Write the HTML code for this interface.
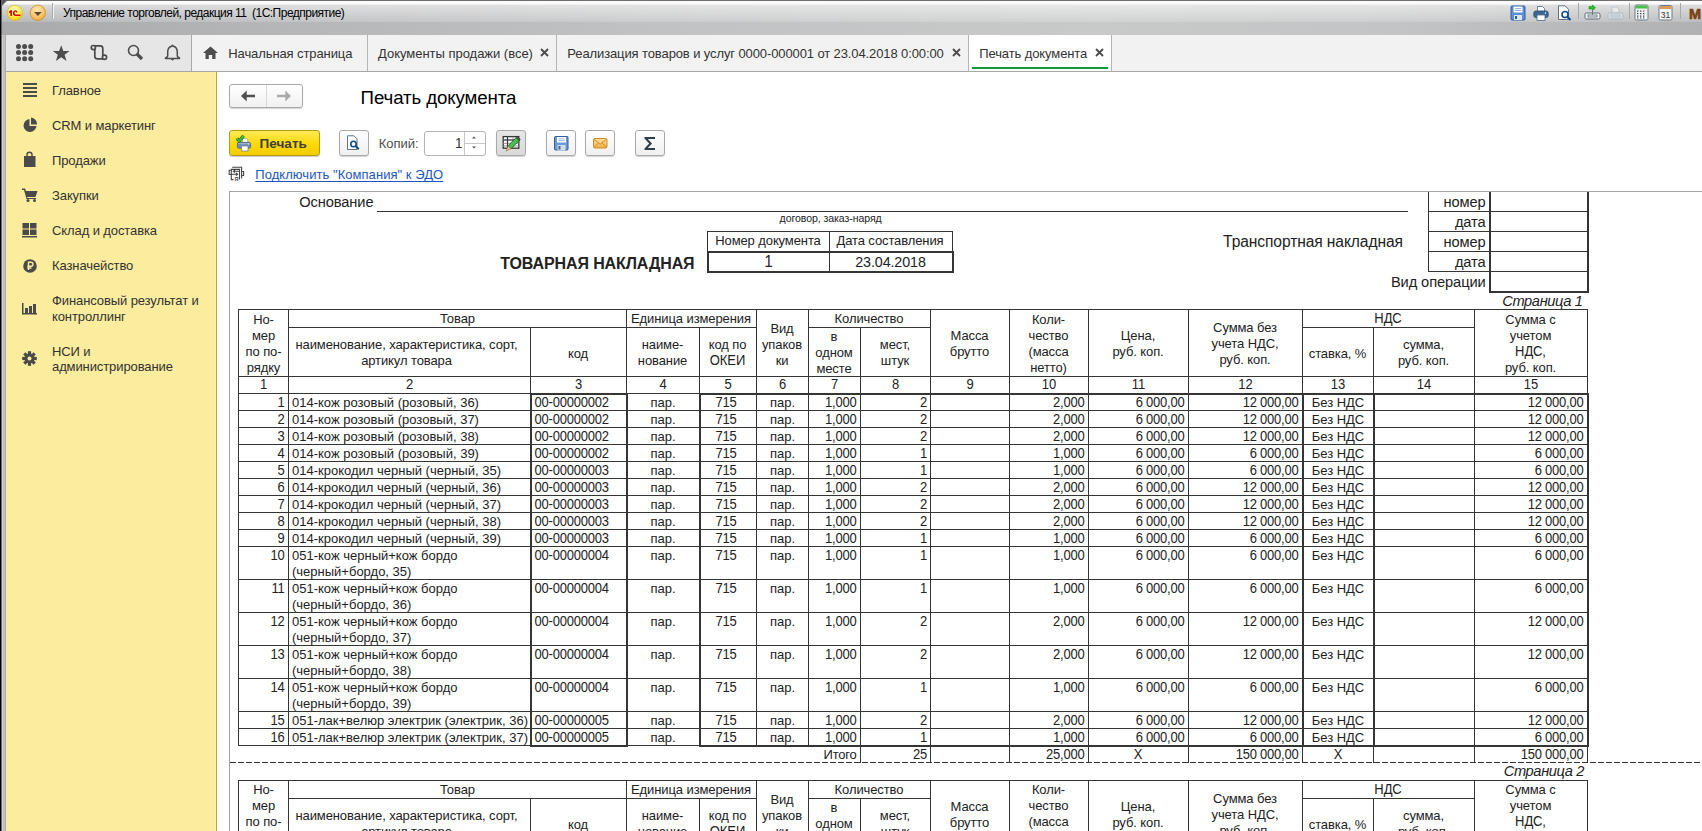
<!DOCTYPE html>
<html><head><meta charset="utf-8"><title>Печать документа</title>
<style>
html,body{margin:0;padding:0;}
body{width:1702px;height:831px;overflow:hidden;position:relative;background:#fff;font-family:"Liberation Sans",sans-serif;}
.r{position:absolute;box-sizing:content-box;}
.t{position:absolute;white-space:nowrap;font-family:"Liberation Sans",sans-serif;}
svg.r{overflow:visible;}
</style></head><body>
<div class="r" style="left:0;top:0;width:1702px;height:35px;background:linear-gradient(90deg,#a9aaac 0,#b6b7b9 300px,#c2c3c4 700px,#c8c9c9 1100px,#c3c4c5 1400px,#b0b1b3 1702px)"></div>
<div class="r" style="left:0;top:0;width:1702px;height:22px;background:linear-gradient(#6e6e6e 0 1px,#fbfbfb 1px 4px,rgba(255,255,255,0.55) 5px,rgba(255,255,255,0.2) 21px,rgba(255,255,255,0.15) 22px)"></div>
<div class="r" style="left:0;top:35px;width:6px;height:796px;background:linear-gradient(90deg,#000 0 1px,#6a6a6a 1px 2px,#d0d0d0 2px 3px,#c0c0c0 3px 5px,#adadb2 5px 6px)"></div>
<div class="r" style="left:0;top:0;width:1px;height:35px;background:#000"></div>
<div class="r" style="left:1px;top:0;width:1px;height:35px;background:#606060"></div>
<div class="r" style="left:2px;top:0;width:6px;height:6px;background:linear-gradient(135deg,#5a5a5a 0 40%,transparent 55%)"></div>
<svg class="r" style="left:6px;top:4px" width="18" height="18" viewBox="0 0 18 18">
<defs><radialGradient id="g1c" cx="45%" cy="30%" r="70%"><stop offset="0" stop-color="#ffffc8"/><stop offset="0.55" stop-color="#fff060"/><stop offset="1" stop-color="#f4d000"/></radialGradient></defs>
<circle cx="8.85" cy="8.8" r="7.6" fill="url(#g1c)" stroke="#d8b820" stroke-width="0.7"/>
<path d="M2.9 7.6 L4.6 6.2 L6 6.2 L6 12 L4.4 12 L4.4 8.6 L3.2 9.2Z" fill="#e00000"/>
<path d="M11.2 8.4 C11.4 7 10.4 6.2 9.4 6.2 C7.8 6.2 6.9 7.5 6.9 9 C6.9 10.6 7.9 12 9.6 12 L14.4 12 L14.4 10.4 L9.8 10.4 C9 10.4 8.5 9.8 8.5 9 C8.5 8.2 9 7.6 9.6 7.6 C10 7.6 10.2 7.9 10.2 8.4Z" fill="#e00000"/>
</svg>
<svg class="r" style="left:30px;top:4px" width="18" height="18" viewBox="0 0 18 18">
<defs><radialGradient id="gdd" cx="45%" cy="30%" r="70%"><stop offset="0" stop-color="#ffe8b8"/><stop offset="0.6" stop-color="#ffc870"/><stop offset="1" stop-color="#f8a838"/></radialGradient></defs>
<circle cx="7.8" cy="8.8" r="7.7" fill="url(#gdd)" stroke="#c09030" stroke-width="0.8"/>
<path d="M4 7.9 L11.8 7.9 L7.9 12Z" fill="#5a4a30"/>
</svg>
<div class="r" style="left:52px;top:3px;width:1px;height:16px;background:#a9a9a9;"></div>
<div class="r" style="left:53px;top:3px;width:1px;height:16px;background:#f4f4f4;"></div>
<div class="t" style="top:7.00px;font-size:12px;line-height:12px;color:#000;letter-spacing:-0.52px;left:63px;white-space:pre;">Управление торговлей, редакция 11  (1С:Предприятие)</div>
<svg class="r" style="left:1510px;top:5px" width="16" height="16" viewBox="0 0 16 16">
<rect x="1" y="1" width="14" height="14" rx="1" fill="#5b8fd6" stroke="#2f5c9e"/>
<rect x="3.5" y="1.5" width="9" height="6" fill="#fff"/><rect x="5" y="3" width="6" height="0.8" fill="#7fa4d8"/><rect x="5" y="5" width="6" height="0.8" fill="#7fa4d8"/>
<rect x="4" y="10" width="8" height="5" fill="#dfe6ee"/><rect x="5" y="11" width="2" height="3" fill="#2f5c9e"/>
</svg>
<svg class="r" style="left:1533px;top:5px" width="16" height="16" viewBox="0 0 16 16">
<path d="M4.5 1.5 L9.5 1.5 L11.5 3.5 L11.5 7 L4.5 7Z" fill="#fff" stroke="#4a6a8a" stroke-width="0.8"/>
<rect x="0.8" y="6" width="14.4" height="6.5" rx="2" fill="#3d6896" stroke="#254a70" stroke-width="0.8"/>
<rect x="4" y="10" width="8" height="5.5" fill="#fff" stroke="#4a6a8a" stroke-width="0.8"/>
<circle cx="12.5" cy="8" r="0.7" fill="#fff"/>
</svg>
<svg class="r" style="left:1557px;top:5px" width="16" height="16" viewBox="0 0 16 16">
<path d="M1.5 0.8 L8 0.8 L11.5 4.3 L11.5 14.5 L1.5 14.5Z" fill="#fff" stroke="#50657a" stroke-width="0.9"/>
<circle cx="8" cy="9.5" r="3" fill="#fff" stroke="#0f4d8a" stroke-width="1.6"/>
<path d="M10 11.5 L13.5 15" stroke="#0f4d8a" stroke-width="2.2"/>
</svg>
<div class="r" style="left:1578px;top:3px;width:1px;height:16px;background:#a9a9a9;"></div>
<svg class="r" style="left:1584px;top:4px" width="17" height="17" viewBox="0 0 17 17">
<path d="M8.5 1 L11.5 3.8 L8.5 6.6 L8.5 5 L5 5 L5 2.6 L8.5 2.6Z" fill="#22c820" stroke="#128a10" stroke-width="0.6"/>
<rect x="1" y="9" width="15" height="6" rx="1.5" fill="#f4f4f4" stroke="#5a6a78" stroke-width="1"/>
<rect x="4" y="11" width="9" height="2" fill="none" stroke="#5a6a78" stroke-width="0.8"/>
<path d="M8.5 6.5 L8.5 11" stroke="#5a6a78" stroke-width="0.8"/>
</svg>
<svg class="r" style="left:1607px;top:4px" width="17" height="17" viewBox="0 0 17 17" opacity="0.45">
<path d="M5 3 L10 3 L12 5 L12 9 L5 9Z" fill="#fff" stroke="#8aa0b5" stroke-width="0.8"/>
<rect x="1" y="9" width="15" height="6" rx="1.5" fill="#eef2f6" stroke="#8aa0b5" stroke-width="1"/>
<rect x="4" y="11" width="9" height="2" fill="none" stroke="#8aa0b5" stroke-width="0.8"/>
</svg>
<div class="r" style="left:1629px;top:3px;width:1px;height:16px;background:#a9a9a9;"></div>
<svg class="r" style="left:1634px;top:4px" width="15" height="17" viewBox="0 0 15 17">
<rect x="1" y="1" width="13" height="15" rx="1.5" fill="#f2f4f6" stroke="#6d7a86" stroke-width="1"/>
<rect x="1.5" y="1.5" width="12" height="3" fill="#49c14a"/>
<g fill="#3a4550"><rect x="3" y="6.5" width="1.4" height="1.2"/><rect x="6" y="6.5" width="1.4" height="1.2"/><rect x="9" y="6.5" width="1.4" height="1.2" fill="#e02020"/>
<rect x="3" y="9" width="1.4" height="1.2"/><rect x="6" y="9" width="1.4" height="1.2"/><rect x="9" y="9" width="1.4" height="1.2"/>
<rect x="3" y="11.5" width="1.4" height="1.2"/><rect x="6" y="11.5" width="1.4" height="1.2"/><rect x="9" y="11.5" width="1.4" height="1.2"/>
<rect x="3" y="13.5" width="1.4" height="1"/><rect x="6" y="13.5" width="1.4" height="1"/><rect x="9" y="13.5" width="1.4" height="1"/></g>
</svg>
<svg class="r" style="left:1658px;top:4px" width="15" height="17" viewBox="0 0 15 17">
<rect x="1" y="1.5" width="13" height="14.5" rx="1.5" fill="#f6f6f6" stroke="#6d7a86" stroke-width="1"/>
<rect x="1.5" y="2" width="12" height="3" fill="#d99a60"/>
<text x="7.5" y="13.8" font-family="Liberation Sans" font-size="8.5" text-anchor="middle" fill="#333">31</text>
</svg>
<div class="r" style="left:1680px;top:3px;width:1px;height:16px;background:#a9a9a9;"></div>
<div class="t" style="top:7.00px;font-size:14.5px;line-height:14.5px;color:#7a4210;font-weight:bold;left:1689px;-webkit-text-stroke:0.6px #7a4210;">M</div>
<div class="r" style="left:6px;top:35px;width:1696px;height:36px;background:#f2f2f2;"></div>
<div class="r" style="left:6px;top:35px;width:185px;height:36px;background:#e6e6e6;"></div>
<div class="r" style="left:191px;top:35px;width:1px;height:36px;background:#a9a9a9;"></div>
<div class="r" style="left:6px;top:71px;width:1696px;height:1px;background:#a6a6a6;"></div>
<svg class="r" style="left:16px;top:44px" width="18" height="18" viewBox="0 0 18 18" fill="#4d4d4d"><circle cx="2.5" cy="2.5" r="2.5"/><circle cx="8.6" cy="2.5" r="2.5"/><circle cx="14.7" cy="2.5" r="2.5"/><circle cx="2.5" cy="8.6" r="2.5"/><circle cx="8.6" cy="8.6" r="2.5"/><circle cx="14.7" cy="8.6" r="2.5"/><circle cx="2.5" cy="14.7" r="2.5"/><circle cx="8.6" cy="14.7" r="2.5"/><circle cx="14.7" cy="14.7" r="2.5"/></svg>
<svg class="r" style="left:53px;top:45px" width="17" height="17" viewBox="0 0 17 17"><path d="M8.2 0.2 L10.3 6 L16.5 6 L11.6 9.7 L13.5 16 L8.2 12.2 L2.9 16 L4.8 9.7 L-0.1 6 L6.1 6Z" fill="#4d4d4d"/></svg>
<svg class="r" style="left:86px;top:40px" width="26" height="26" viewBox="0 0 26 26" fill="none" stroke="#4a4a4a" stroke-width="1.7"><path d="M7.4 5.8 L14.2 5.8 Q16.8 5.8 16.8 8.4 L16.8 15.8"/><path d="M8.8 8.6 L8.8 16.2 Q8.8 18.8 11.4 18.8 L17.5 18.8"/><circle cx="7.35" cy="7.6" r="2.1" fill="#e6e6e6"/><circle cx="18.5" cy="17.3" r="2.1" fill="#e6e6e6"/></svg>
<svg class="r" style="left:127px;top:44px" width="18" height="18" viewBox="0 0 18 18"><circle cx="6.5" cy="6.5" r="5" fill="none" stroke="#4d4d4d" stroke-width="1.6"/><path d="M10 10 L15 15" stroke="#4d4d4d" stroke-width="3.2"/></svg>
<svg class="r" style="left:164px;top:44px" width="17" height="18" viewBox="0 0 17 18"><path d="M8.5 1.2 L9.5 2.3 Q13.2 3.3 13.3 8 L13.3 12 Q13.6 13.2 15.5 14 L15.5 14.6 L1.5 14.6 L1.5 14 Q3.4 13.2 3.7 12 L3.7 8 Q3.8 3.3 7.5 2.3Z" fill="none" stroke="#4d4d4d" stroke-width="1.5" stroke-linejoin="round"/><path d="M6.8 15 L10.2 15 L8.5 16.8Z" fill="#4d4d4d"/></svg>
<svg class="r" style="left:203px;top:46px" width="16" height="14" viewBox="0 0 16 14"><path d="M7.5 0.5 L15 7 L12.5 7 L12.5 13 L9.2 13 L9.2 9 L5.8 9 L5.8 13 L2.5 13 L2.5 7 L0 7Z" fill="#4d4d4d"/></svg>
<div class="t" style="top:47.00px;font-size:13px;line-height:13px;color:#333;letter-spacing:-0.1px;left:228.3px;">Начальная страница</div>
<div class="r" style="left:367px;top:35px;width:1px;height:36px;background:#b5b5b5;"></div>
<div class="t" style="top:47.00px;font-size:13px;line-height:13px;color:#333;letter-spacing:-0.02px;left:378px;">Документы продажи (все)</div>
<svg class="r" style="left:540px;top:48px" width="9" height="9" viewBox="0 0 9 9"><path d="M1 1 L8 8 M8 1 L1 8" stroke="#4d4d4d" stroke-width="1.9"/></svg>
<div class="r" style="left:556px;top:35px;width:1px;height:36px;background:#b5b5b5;"></div>
<div class="t" style="top:47.00px;font-size:13px;line-height:13px;color:#333;letter-spacing:-0.11px;left:567.3px;">Реализация товаров и услуг 0000-000001 от 23.04.2018 0:00:00</div>
<svg class="r" style="left:952px;top:48px" width="9" height="9" viewBox="0 0 9 9"><path d="M1 1 L8 8 M8 1 L1 8" stroke="#4d4d4d" stroke-width="1.9"/></svg>
<div class="r" style="left:968px;top:35px;width:1px;height:36px;background:#b5b5b5;"></div>
<div class="r" style="left:969px;top:35px;width:142px;height:36px;background:#ffffff;"></div>
<div class="r" style="left:1111px;top:35px;width:1px;height:36px;background:#b5b5b5;"></div>
<div class="r" style="left:972px;top:67px;width:136px;height:2px;background:#16993a;"></div>
<div class="t" style="top:47.00px;font-size:13px;line-height:13px;color:#333;letter-spacing:-0.1px;left:979.2px;">Печать документа</div>
<svg class="r" style="left:1095px;top:48px" width="9" height="9" viewBox="0 0 9 9"><path d="M1 1 L8 8 M8 1 L1 8" stroke="#4d4d4d" stroke-width="1.9"/></svg>
<div class="r" style="left:6px;top:72px;width:210px;height:759px;background:#fbec9e;"></div>
<div class="r" style="left:215px;top:72px;width:1px;height:759px;background:#fdf0a8;"></div>
<div class="r" style="left:216px;top:72px;width:1px;height:759px;background:#c9a626;"></div>
<div class="t" style="top:84.00px;font-size:13px;line-height:13px;color:#333;letter-spacing:-0.1px;left:52px;">Главное</div>
<div class="t" style="top:119.00px;font-size:13px;line-height:13px;color:#333;letter-spacing:-0.1px;left:52px;">CRM и маркетинг</div>
<div class="t" style="top:154.00px;font-size:13px;line-height:13px;color:#333;letter-spacing:-0.1px;left:52px;">Продажи</div>
<div class="t" style="top:189.00px;font-size:13px;line-height:13px;color:#333;letter-spacing:-0.1px;left:52px;">Закупки</div>
<div class="t" style="top:224.00px;font-size:13px;line-height:13px;color:#333;letter-spacing:-0.1px;left:52px;">Склад и доставка</div>
<div class="t" style="top:259.00px;font-size:13px;line-height:13px;color:#333;letter-spacing:-0.1px;left:52px;">Казначейство</div>
<div class="t" style="top:294.00px;font-size:13px;line-height:13px;color:#333;letter-spacing:-0.1px;left:52px;">Финансовый результат и</div>
<div class="t" style="top:310.00px;font-size:13px;line-height:13px;color:#333;letter-spacing:-0.1px;left:52px;">контроллинг</div>
<div class="t" style="top:345.00px;font-size:13px;line-height:13px;color:#333;letter-spacing:-0.1px;left:52px;">НСИ и</div>
<div class="t" style="top:360.00px;font-size:13px;line-height:13px;color:#333;letter-spacing:-0.1px;left:52px;">администрирование</div>
<svg class="r" style="left:23px;top:83px" width="15" height="15" viewBox="0 0 15 15" fill="#4a4a4a"><rect x="0" y="0" width="14" height="2"/><rect x="0" y="4" width="14" height="2"/><rect x="0" y="8" width="14" height="2"/><rect x="0" y="12" width="14" height="2"/></svg>
<svg class="r" style="left:23px;top:117px" width="15" height="16" viewBox="0 0 15 16" fill="#4a4a4a"><path d="M6.5 2 A6.5 6.5 0 1 0 13.5 9 L6.5 9Z"/><path d="M8 0.5 A6.5 6.5 0 0 1 14 7.5 L8 7.5Z"/></svg>
<svg class="r" style="left:23px;top:151px" width="14" height="17" viewBox="0 0 14 17"><path d="M4 6 L4 3.5 Q4 1.3 6.5 1.3 Q9 1.3 9 3.5 L9 6" fill="none" stroke="#4a4a4a" stroke-width="1.4"/><path d="M1 5 L12.5 5 L12.5 16 L1 16Z" fill="#4a4a4a"/></svg>
<svg class="r" style="left:22px;top:188px" width="16" height="14" viewBox="0 0 16 14" fill="#4a4a4a"><path d="M0 0.5 L3 0.5 L4 3 L15.5 3 L13.5 9 L5 9 L5.5 10 L14 10 L14 11 L4.5 11 L2 2 L0 2Z"/><circle cx="6" cy="12.5" r="1.5"/><circle cx="12.5" cy="12.5" r="1.5"/></svg>
<svg class="r" style="left:22px;top:223px" width="16" height="15" viewBox="0 0 16 15" fill="#4a4a4a"><rect x="0.5" y="0" width="6.5" height="5.5"/><rect x="8" y="0" width="6.5" height="5.5"/><rect x="0.5" y="6.5" width="6.5" height="5.5"/><rect x="8" y="6.5" width="6.5" height="5.5"/><rect x="0" y="13" width="15" height="1.5"/></svg>
<svg class="r" style="left:23px;top:259px" width="14" height="14" viewBox="0 0 14 14"><circle cx="7" cy="7" r="6.8" fill="#4a4a4a"/><path d="M5.5 11 L5.5 3.3 L8 3.3 Q10 3.3 10 5.3 Q10 7.3 8 7.3 L4.3 7.3 M4.3 9 L8.5 9" fill="none" stroke="#fbec9e" stroke-width="1.4"/></svg>
<svg class="r" style="left:22px;top:303px" width="16" height="12" viewBox="0 0 16 12" fill="#4a4a4a"><rect x="0" y="0" width="1.5" height="11"/><rect x="3" y="5" width="3" height="6"/><rect x="7" y="3" width="3" height="8"/><rect x="11" y="1" width="3" height="10"/><rect x="0" y="10" width="15" height="1.5"/></svg>
<svg class="r" style="left:22px;top:351px" width="16" height="16" viewBox="0 0 16 16"><g transform="translate(7.5 7.5)" fill="#4a4a4a"><rect x="-1.6" y="-7.3" width="3.2" height="3.5" transform="rotate(0)"/><rect x="-1.6" y="-7.3" width="3.2" height="3.5" transform="rotate(45)"/><rect x="-1.6" y="-7.3" width="3.2" height="3.5" transform="rotate(90)"/><rect x="-1.6" y="-7.3" width="3.2" height="3.5" transform="rotate(135)"/><rect x="-1.6" y="-7.3" width="3.2" height="3.5" transform="rotate(180)"/><rect x="-1.6" y="-7.3" width="3.2" height="3.5" transform="rotate(225)"/><rect x="-1.6" y="-7.3" width="3.2" height="3.5" transform="rotate(270)"/><rect x="-1.6" y="-7.3" width="3.2" height="3.5" transform="rotate(315)"/><circle r="5"/><circle r="2" fill="#fbec9e"/></g></svg>
<div class="r" style="left:217px;top:72px;width:1485px;height:759px;background:#ffffff;"></div>
<div class="r" style="left:229px;top:84px;width:72px;height:22px;border:1px solid #a9a9a9;border-radius:3px;background:linear-gradient(#ffffff,#f1f1f1);box-shadow:0 1px 1px rgba(0,0,0,0.18)"></div>
<div class="r" style="left:266px;top:85px;width:1px;height:22px;background:#d8d8d8;"></div>
<svg class="r" style="left:240px;top:89px" width="16" height="14" viewBox="0 0 16 14"><path d="M1 7 L6.7 1.4 L6.7 5.8 L15 5.8 L15 8.3 L6.7 8.3 L6.7 12.6Z" fill="#505050"/></svg>
<svg class="r" style="left:276px;top:89px" width="16" height="14" viewBox="0 0 16 14"><path d="M15 7 L9.3 1.4 L9.3 5.8 L1 5.8 L1 8.3 L9.3 8.3 L9.3 12.6Z" fill="#aaaaaa"/></svg>
<div class="t" style="top:89.00px;font-size:18.67px;line-height:18.67px;color:#000;letter-spacing:-0.1px;left:360.6px;">Печать документа</div>
<div class="r" style="left:229px;top:130px;width:89px;height:24px;border:1px solid #b89a10;border-radius:3px;background:linear-gradient(#ffea58,#fcd800 60%,#f2cc00);box-shadow:0 1px 1px rgba(0,0,0,0.2)"></div>
<svg class="r" style="left:235px;top:134px" width="18" height="18" viewBox="0 0 18 18"><path d="M7.5 4.5 L11.5 4.5 L12.8 5.8 L12.8 8.5 L7.5 8.5Z" fill="#fff" stroke="#8a96a4" stroke-width="0.7"/><rect x="2.3" y="8.4" width="13.3" height="5.8" rx="1.6" fill="#6f8fb8" stroke="#48688f" stroke-width="0.9"/><rect x="3" y="9.2" width="12" height="0.9" fill="#a8bcd6"/><rect x="6.6" y="12" width="6.4" height="5" fill="#fff" stroke="#7a8694" stroke-width="0.8"/><circle cx="13.6" cy="10" r="0.55" fill="#fff"/><path d="M1.9 4.5 L4.2 7 L8.6 1.8" fill="none" stroke="#1f6a1f" stroke-width="3.2" stroke-linejoin="round"/><path d="M1.9 4.5 L4.2 7 L8.6 1.8" fill="none" stroke="#3ec83e" stroke-width="1.8" stroke-linejoin="round"/></svg>
<div class="t" style="top:137.00px;font-size:13.5px;line-height:13.5px;color:#404040;font-weight:bold;letter-spacing:0.05px;left:259.5px;">Печать</div>
<div class="r" style="left:339px;top:130px;width:28px;height:24px;border:1px solid #a9a9a9;border-radius:3px;background:linear-gradient(#ffffff,#f0f0f0);box-shadow:0 1px 1px rgba(0,0,0,0.18)"></div>
<svg class="r" style="left:346px;top:135px" width="16" height="16" viewBox="0 0 16 16"><path d="M1.5 0.8 L8 0.8 L11 3.8 L11 14.5 L1.5 14.5Z" fill="#fff" stroke="#50657a" stroke-width="0.9"/><circle cx="7.5" cy="9" r="2.7" fill="#fff" stroke="#0f4d8a" stroke-width="1.6"/><path d="M9.3 10.8 L12.8 14.3" stroke="#0f4d8a" stroke-width="2"/></svg>
<div class="t" style="top:137.00px;font-size:13px;line-height:13px;color:#4d4d4d;letter-spacing:-0.05px;left:378.8px;">Копий:</div>
<div class="r" style="left:424px;top:131px;width:60px;height:23px;border:1px solid #b4b4b4;border-radius:3px;background:#fff"></div>
<div class="r" style="left:464px;top:132px;width:1px;height:23px;background:#c8c8c8;"></div>
<div class="r" style="left:465px;top:143px;width:20px;height:1px;background:#c8c8c8;"></div>
<div class="t" style="top:137.00px;font-size:13.5px;line-height:13.5px;color:#333;transform:scaleY(1.07);transform-origin:0 11.43px;right:1239.5px;">1</div>
<svg class="r" style="left:471px;top:135px" width="6" height="16" viewBox="0 0 6 16" fill="#555"><path d="M1 3.5 L3 1.5 L5 3.5Z"/><path d="M1 11.5 L3 13.5 L5 11.5Z"/></svg>
<div class="r" style="left:496px;top:130px;width:28px;height:24px;border:1px solid #a9a9a9;border-radius:3px;background:linear-gradient(#e6e6e6,#dadada);box-shadow:0 1px 1px rgba(0,0,0,0.18)"></div>
<svg class="r" style="left:502px;top:135px" width="19" height="18" viewBox="0 0 19 18"><rect x="1.2" y="1.6" width="15.6" height="11.6" fill="#fff" stroke="#333" stroke-width="1.3"/><path d="M1.2 5 L16.8 5 M1.2 8.3 L16.8 8.3 M1.2 11 L16.8 11 M5.5 1.6 L5.5 13.2 M11 1.6 L11 13.2" stroke="#8a8a8a" stroke-width="0.9"/><path d="M1.2 5 L16.8 5 M5.5 1.6 L5.5 13.2" stroke="#333" stroke-width="1.1"/><path d="M14.2 2.6 L17.2 5.6 L9 13.8 L6 10.8Z" fill="#45c050" stroke="#1f5a28" stroke-width="0.8"/><path d="M14.2 2.6 L15.3 1.5 L18.3 4.5 L17.2 5.6Z" fill="#555" stroke="#333" stroke-width="0.6"/><path d="M6 10.8 L9 13.8 L4.2 16.2Z" fill="#e8c080" stroke="#8a6a3a" stroke-width="0.5"/></svg>
<div class="r" style="left:546px;top:130px;width:28px;height:24px;border:1px solid #a9a9a9;border-radius:3px;background:linear-gradient(#ffffff,#f0f0f0);box-shadow:0 1px 1px rgba(0,0,0,0.18)"></div>
<svg class="r" style="left:553.5px;top:135.5px" width="15" height="15" viewBox="0 0 15 15"><rect x="0.5" y="0.5" width="13.5" height="13.5" rx="1" fill="#6a9ad8" stroke="#2f5fa0"/><rect x="3" y="1" width="9" height="5.5" fill="#fff"/><rect x="4.5" y="2.5" width="6" height="0.8" fill="#7fa4d8"/><rect x="4.5" y="4.3" width="6" height="0.8" fill="#7fa4d8"/><rect x="3.5" y="9" width="8" height="5.5" fill="#d5dde6"/><rect x="4.5" y="10" width="2" height="3.5" fill="#3a64a0"/></svg>
<div class="r" style="left:585px;top:130px;width:28px;height:24px;border:1px solid #a9a9a9;border-radius:3px;background:linear-gradient(#ffffff,#f0f0f0);box-shadow:0 1px 1px rgba(0,0,0,0.18)"></div>
<svg class="r" style="left:592.5px;top:137.5px" width="15" height="11" viewBox="0 0 15 11"><defs><linearGradient id="gml" x1="0" y1="0" x2="0" y2="1"><stop offset="0" stop-color="#fbe0a0"/><stop offset="1" stop-color="#f0b040"/></linearGradient></defs><rect x="0.5" y="0.5" width="13.5" height="9.5" rx="1.5" fill="url(#gml)" stroke="#d08a28"/><path d="M1 1.2 L7.25 6.3 L13.5 1.2 M1 9.5 L5.3 5.2 M13.5 9.5 L9.2 5.2" fill="none" stroke="#c8862a" stroke-width="0.9"/></svg>
<div class="r" style="left:635px;top:130px;width:28px;height:24px;border:1px solid #a9a9a9;border-radius:3px;background:linear-gradient(#ffffff,#f0f0f0);box-shadow:0 1px 1px rgba(0,0,0,0.18)"></div>
<svg class="r" style="left:642px;top:134.5px" width="16" height="17" viewBox="0 0 16 17"><path d="M2.5 2 L13 2 L13 4 L5.8 4 L10 8.5 L5.8 13 L13 13 L13 15 L2.5 15 L2.5 13.5 L7.2 8.5 L2.5 3.5Z" fill="#2e3e4e"/></svg>
<svg class="r" style="left:225px;top:162px" width="24" height="22" viewBox="0 0 24 22" fill="none" stroke="#454545" stroke-width="1.1"><path d="M7.2 5.3 L16.6 5.3 L16.6 16.6"/><path d="M8.5 17.6 L6.3 17.6 L6.3 7.4 L14.5 7.4 L14.5 17.6"/><path d="M6.3 8.3 L4.2 8.3 L4.2 12.5 L6.3 12.5"/><path d="M16.6 9.5 L18.6 9.5 L18.6 13.5 L16.6 13.5"/><path d="M14.4 9.3 L8.6 9.3 M10 8 L8.4 9.3 L10 10.6"/><path d="M6.3 12.3 L12.4 12.3 M11 11 L12.6 12.3 L11 13.6"/><text x="11.4" y="18.8" font-size="5.5" fill="#454545" stroke="none" text-anchor="middle" font-family="Liberation Sans" font-weight="bold">Я</text></svg>
<div class="t" style="top:168.00px;font-size:13px;line-height:13px;color:#1b57c2;letter-spacing:0.05px;left:255.3px;text-decoration:underline;text-decoration-skip-ink:none;text-underline-offset:2px;">Подключить &quot;Компания&quot; к ЭДО</div>
<div class="r" style="left:229px;top:191px;width:1473px;height:1px;background:#a3a3a3;"></div>
<div class="r" style="left:229px;top:191px;width:1px;height:640px;background:#a3a3a3;"></div>
<div class="t" style="top:195.00px;font-size:14.67px;line-height:14.67px;color:#222;letter-spacing:-0.1px;right:1328.5px;">Основание</div>
<div class="r" style="left:377px;top:211px;width:1031px;height:1px;background:#353535;"></div>
<div class="t" style="top:213.00px;font-size:10.5px;line-height:10.5px;color:#222;letter-spacing:-0.05px;left:530.6px;width:600px;text-align:center;">договор, заказ-наряд</div>
<div class="r" style="left:707px;top:231px;width:246px;height:1px;background:#353535;"></div>
<div class="r" style="left:707px;top:231px;width:1px;height:21px;background:#353535;"></div>
<div class="r" style="left:829px;top:231px;width:1px;height:42px;background:#353535;"></div>
<div class="r" style="left:952px;top:231px;width:1px;height:21px;background:#353535;"></div>
<div class="r" style="left:707px;top:251px;width:247px;height:2px;background:#353535;"></div>
<div class="r" style="left:707px;top:271px;width:247px;height:2px;background:#353535;"></div>
<div class="r" style="left:707px;top:251px;width:2px;height:22px;background:#353535;"></div>
<div class="r" style="left:952px;top:251px;width:2px;height:22px;background:#353535;"></div>
<div class="t" style="top:234.00px;font-size:13px;line-height:13px;color:#222;letter-spacing:-0.1px;left:468px;width:600px;text-align:center;">Номер документа</div>
<div class="t" style="top:234.00px;font-size:13px;line-height:13px;color:#222;letter-spacing:-0.1px;left:590px;width:600px;text-align:center;">Дата составления</div>
<div class="t" style="top:255.00px;font-size:14.67px;line-height:14.67px;color:#222;transform:scaleY(1.07);transform-origin:0 12.42px;left:468.5px;width:600px;text-align:center;">1</div>
<div class="t" style="top:255.00px;font-size:14.3px;line-height:14.3px;color:#222;transform:scaleY(1.07);transform-origin:0 12.10px;letter-spacing:-0.1px;left:590.5px;width:600px;text-align:center;">23.04.2018</div>
<div class="t" style="top:256.00px;font-size:16px;line-height:16px;color:#222;transform:scaleY(1.07);transform-origin:0 13.54px;font-weight:bold;letter-spacing:-0.1px;right:1007.5px;">ТОВАРНАЯ НАКЛАДНАЯ</div>
<div class="t" style="top:234.00px;font-size:15.6px;line-height:15.6px;color:#222;letter-spacing:-0.1px;right:299.20000000000005px;">Транспортная накладная</div>
<div class="r" style="left:1428px;top:192px;width:1px;height:80px;background:#353535;"></div>
<div class="r" style="left:1428px;top:211px;width:161px;height:1px;background:#353535;"></div>
<div class="r" style="left:1428px;top:231px;width:161px;height:1px;background:#353535;"></div>
<div class="r" style="left:1428px;top:251px;width:161px;height:1px;background:#353535;"></div>
<div class="r" style="left:1428px;top:271px;width:161px;height:1px;background:#353535;"></div>
<div class="r" style="left:1489px;top:192px;width:2px;height:101px;background:#353535;"></div>
<div class="r" style="left:1587px;top:192px;width:2px;height:101px;background:#353535;"></div>
<div class="r" style="left:1489px;top:291px;width:100px;height:2px;background:#353535;"></div>
<div class="t" style="top:195.00px;font-size:14.67px;line-height:14.67px;color:#222;letter-spacing:-0.1px;right:216.4000000000001px;">номер</div>
<div class="t" style="top:215.00px;font-size:14.67px;line-height:14.67px;color:#222;letter-spacing:-0.1px;right:216.4000000000001px;">дата</div>
<div class="t" style="top:235.00px;font-size:14.67px;line-height:14.67px;color:#222;letter-spacing:-0.1px;right:216.4000000000001px;">номер</div>
<div class="t" style="top:255.00px;font-size:14.67px;line-height:14.67px;color:#222;letter-spacing:-0.1px;right:216.4000000000001px;">дата</div>
<div class="t" style="top:275.00px;font-size:14.67px;line-height:14.67px;color:#222;letter-spacing:-0.1px;right:216.4000000000001px;">Вид операции</div>
<div class="t" style="top:294.00px;font-size:14.67px;line-height:14.67px;color:#222;font-style:italic;letter-spacing:-0.38px;right:119.5px;">Страница 1</div>
<div class="r" style="left:238px;top:309px;width:1350px;height:1px;background:#353535;"></div>
<div class="r" style="left:288px;top:327px;width:469px;height:1px;background:#353535;"></div>
<div class="r" style="left:808px;top:327px;width:123px;height:1px;background:#353535;"></div>
<div class="r" style="left:1302px;top:327px;width:173px;height:1px;background:#353535;"></div>
<div class="r" style="left:238px;top:376px;width:1350px;height:1px;background:#353535;"></div>
<div class="r" style="left:238px;top:309px;width:1px;height:85px;background:#353535;"></div>
<div class="r" style="left:288px;top:309px;width:1px;height:85px;background:#353535;"></div>
<div class="r" style="left:530px;top:327px;width:1px;height:67px;background:#353535;"></div>
<div class="r" style="left:626px;top:309px;width:1px;height:85px;background:#353535;"></div>
<div class="r" style="left:699px;top:327px;width:1px;height:67px;background:#353535;"></div>
<div class="r" style="left:756px;top:309px;width:1px;height:85px;background:#353535;"></div>
<div class="r" style="left:808px;top:309px;width:1px;height:85px;background:#353535;"></div>
<div class="r" style="left:860px;top:327px;width:1px;height:67px;background:#353535;"></div>
<div class="r" style="left:930px;top:309px;width:1px;height:85px;background:#353535;"></div>
<div class="r" style="left:1009px;top:309px;width:1px;height:85px;background:#353535;"></div>
<div class="r" style="left:1088px;top:309px;width:1px;height:85px;background:#353535;"></div>
<div class="r" style="left:1188px;top:309px;width:1px;height:85px;background:#353535;"></div>
<div class="r" style="left:1302px;top:309px;width:1px;height:85px;background:#353535;"></div>
<div class="r" style="left:1373px;top:327px;width:1px;height:67px;background:#353535;"></div>
<div class="r" style="left:1474px;top:309px;width:1px;height:85px;background:#353535;"></div>
<div class="r" style="left:1587px;top:309px;width:1px;height:85px;background:#353535;"></div>
<div class="t" style="top:313.00px;font-size:13px;line-height:13px;color:#222;letter-spacing:-0.1px;left:-36.5px;width:600px;text-align:center;">Но-</div>
<div class="t" style="top:329.00px;font-size:13px;line-height:13px;color:#222;letter-spacing:-0.1px;left:-36.5px;width:600px;text-align:center;">мер</div>
<div class="t" style="top:345.00px;font-size:13px;line-height:13px;color:#222;letter-spacing:-0.1px;left:-36.5px;width:600px;text-align:center;">по по-</div>
<div class="t" style="top:361.00px;font-size:13px;line-height:13px;color:#222;letter-spacing:-0.1px;left:-36.5px;width:600px;text-align:center;">рядку</div>
<div class="t" style="top:312.00px;font-size:13px;line-height:13px;color:#222;letter-spacing:-0.1px;left:157.5px;width:600px;text-align:center;">Товар</div>
<div class="t" style="top:338.00px;font-size:13px;line-height:13px;color:#222;letter-spacing:-0.1px;left:106.5px;width:600px;text-align:center;">наименование, характеристика, сорт,</div>
<div class="t" style="top:354.00px;font-size:13px;line-height:13px;color:#222;letter-spacing:-0.1px;left:106.5px;width:600px;text-align:center;">артикул товара</div>
<div class="t" style="top:347.00px;font-size:13px;line-height:13px;color:#222;letter-spacing:-0.1px;left:278.0px;width:600px;text-align:center;">код</div>
<div class="t" style="top:312.00px;font-size:13px;line-height:13px;color:#222;letter-spacing:-0.1px;left:391.0px;width:600px;text-align:center;">Единица измерения</div>
<div class="t" style="top:338.00px;font-size:13px;line-height:13px;color:#222;letter-spacing:-0.1px;left:362.5px;width:600px;text-align:center;">наиме-</div>
<div class="t" style="top:354.00px;font-size:13px;line-height:13px;color:#222;letter-spacing:-0.1px;left:362.5px;width:600px;text-align:center;">нование</div>
<div class="t" style="top:338.00px;font-size:13px;line-height:13px;color:#222;letter-spacing:-0.1px;left:427.5px;width:600px;text-align:center;">код по</div>
<div class="t" style="top:354.00px;font-size:13px;line-height:13px;color:#222;transform:scaleY(1.07);transform-origin:0 11.00px;letter-spacing:-0.1px;left:427.5px;width:600px;text-align:center;">ОКЕИ</div>
<div class="t" style="top:322.00px;font-size:13px;line-height:13px;color:#222;letter-spacing:-0.1px;left:482.0px;width:600px;text-align:center;">Вид</div>
<div class="t" style="top:338.00px;font-size:13px;line-height:13px;color:#222;letter-spacing:-0.1px;left:482.0px;width:600px;text-align:center;">упаков</div>
<div class="t" style="top:354.00px;font-size:13px;line-height:13px;color:#222;letter-spacing:-0.1px;left:482.0px;width:600px;text-align:center;">ки</div>
<div class="t" style="top:312.00px;font-size:13px;line-height:13px;color:#222;letter-spacing:-0.1px;left:569.0px;width:600px;text-align:center;">Количество</div>
<div class="t" style="top:330.00px;font-size:13px;line-height:13px;color:#222;letter-spacing:-0.1px;left:534.0px;width:600px;text-align:center;">в</div>
<div class="t" style="top:346.00px;font-size:13px;line-height:13px;color:#222;letter-spacing:-0.1px;left:534.0px;width:600px;text-align:center;">одном</div>
<div class="t" style="top:362.00px;font-size:13px;line-height:13px;color:#222;letter-spacing:-0.1px;left:534.0px;width:600px;text-align:center;">месте</div>
<div class="t" style="top:338.00px;font-size:13px;line-height:13px;color:#222;letter-spacing:-0.1px;left:595.0px;width:600px;text-align:center;">мест,</div>
<div class="t" style="top:354.00px;font-size:13px;line-height:13px;color:#222;letter-spacing:-0.1px;left:595.0px;width:600px;text-align:center;">штук</div>
<div class="t" style="top:329.00px;font-size:13px;line-height:13px;color:#222;letter-spacing:-0.1px;left:669.5px;width:600px;text-align:center;">Масса</div>
<div class="t" style="top:345.00px;font-size:13px;line-height:13px;color:#222;letter-spacing:-0.1px;left:669.5px;width:600px;text-align:center;">брутто</div>
<div class="t" style="top:313.00px;font-size:13px;line-height:13px;color:#222;letter-spacing:-0.1px;left:748.5px;width:600px;text-align:center;">Коли-</div>
<div class="t" style="top:329.00px;font-size:13px;line-height:13px;color:#222;letter-spacing:-0.1px;left:748.5px;width:600px;text-align:center;">чество</div>
<div class="t" style="top:345.00px;font-size:13px;line-height:13px;color:#222;letter-spacing:-0.1px;left:748.5px;width:600px;text-align:center;">(масса</div>
<div class="t" style="top:361.00px;font-size:13px;line-height:13px;color:#222;letter-spacing:-0.1px;left:748.5px;width:600px;text-align:center;">нетто)</div>
<div class="t" style="top:329.00px;font-size:13px;line-height:13px;color:#222;letter-spacing:-0.1px;left:838.0px;width:600px;text-align:center;">Цена,</div>
<div class="t" style="top:345.00px;font-size:13px;line-height:13px;color:#222;letter-spacing:-0.1px;left:838.0px;width:600px;text-align:center;">руб. коп.</div>
<div class="t" style="top:321.00px;font-size:13px;line-height:13px;color:#222;letter-spacing:-0.1px;left:945.0px;width:600px;text-align:center;">Сумма без</div>
<div class="t" style="top:337.00px;font-size:13px;line-height:13px;color:#222;letter-spacing:-0.1px;left:945.0px;width:600px;text-align:center;">учета НДС,</div>
<div class="t" style="top:353.00px;font-size:13px;line-height:13px;color:#222;letter-spacing:-0.1px;left:945.0px;width:600px;text-align:center;">руб. коп.</div>
<div class="t" style="top:312.00px;font-size:13px;line-height:13px;color:#222;transform:scaleY(1.07);transform-origin:0 11.00px;letter-spacing:-0.1px;left:1088.0px;width:600px;text-align:center;">НДС</div>
<div class="t" style="top:347.00px;font-size:13px;line-height:13px;color:#222;letter-spacing:-0.1px;left:1037.5px;width:600px;text-align:center;">ставка, %</div>
<div class="t" style="top:338.00px;font-size:13px;line-height:13px;color:#222;letter-spacing:-0.1px;left:1123.5px;width:600px;text-align:center;">сумма,</div>
<div class="t" style="top:354.00px;font-size:13px;line-height:13px;color:#222;letter-spacing:-0.1px;left:1123.5px;width:600px;text-align:center;">руб. коп.</div>
<div class="t" style="top:313.00px;font-size:13px;line-height:13px;color:#222;letter-spacing:-0.1px;left:1230.5px;width:600px;text-align:center;">Сумма с</div>
<div class="t" style="top:329.00px;font-size:13px;line-height:13px;color:#222;letter-spacing:-0.1px;left:1230.5px;width:600px;text-align:center;">учетом</div>
<div class="t" style="top:345.00px;font-size:13px;line-height:13px;color:#222;transform:scaleY(1.07);transform-origin:0 11.00px;letter-spacing:-0.1px;left:1230.5px;width:600px;text-align:center;">НДС,</div>
<div class="t" style="top:361.00px;font-size:13px;line-height:13px;color:#222;letter-spacing:-0.1px;left:1230.5px;width:600px;text-align:center;">руб. коп.</div>
<div class="t" style="top:378.00px;font-size:13px;line-height:13px;color:#222;transform:scaleY(1.07);transform-origin:0 11.00px;letter-spacing:-0.1px;left:-36.5px;width:600px;text-align:center;">1</div>
<div class="t" style="top:378.00px;font-size:13px;line-height:13px;color:#222;transform:scaleY(1.07);transform-origin:0 11.00px;letter-spacing:-0.1px;left:109.5px;width:600px;text-align:center;">2</div>
<div class="t" style="top:378.00px;font-size:13px;line-height:13px;color:#222;transform:scaleY(1.07);transform-origin:0 11.00px;letter-spacing:-0.1px;left:278.5px;width:600px;text-align:center;">3</div>
<div class="t" style="top:378.00px;font-size:13px;line-height:13px;color:#222;transform:scaleY(1.07);transform-origin:0 11.00px;letter-spacing:-0.1px;left:363.0px;width:600px;text-align:center;">4</div>
<div class="t" style="top:378.00px;font-size:13px;line-height:13px;color:#222;transform:scaleY(1.07);transform-origin:0 11.00px;letter-spacing:-0.1px;left:428.0px;width:600px;text-align:center;">5</div>
<div class="t" style="top:378.00px;font-size:13px;line-height:13px;color:#222;transform:scaleY(1.07);transform-origin:0 11.00px;letter-spacing:-0.1px;left:482.5px;width:600px;text-align:center;">6</div>
<div class="t" style="top:378.00px;font-size:13px;line-height:13px;color:#222;transform:scaleY(1.07);transform-origin:0 11.00px;letter-spacing:-0.1px;left:534.5px;width:600px;text-align:center;">7</div>
<div class="t" style="top:378.00px;font-size:13px;line-height:13px;color:#222;transform:scaleY(1.07);transform-origin:0 11.00px;letter-spacing:-0.1px;left:595.5px;width:600px;text-align:center;">8</div>
<div class="t" style="top:378.00px;font-size:13px;line-height:13px;color:#222;transform:scaleY(1.07);transform-origin:0 11.00px;letter-spacing:-0.1px;left:670.0px;width:600px;text-align:center;">9</div>
<div class="t" style="top:378.00px;font-size:13px;line-height:13px;color:#222;transform:scaleY(1.07);transform-origin:0 11.00px;letter-spacing:-0.1px;left:749.0px;width:600px;text-align:center;">10</div>
<div class="t" style="top:378.00px;font-size:13px;line-height:13px;color:#222;transform:scaleY(1.07);transform-origin:0 11.00px;letter-spacing:-0.1px;left:838.5px;width:600px;text-align:center;">11</div>
<div class="t" style="top:378.00px;font-size:13px;line-height:13px;color:#222;transform:scaleY(1.07);transform-origin:0 11.00px;letter-spacing:-0.1px;left:945.5px;width:600px;text-align:center;">12</div>
<div class="t" style="top:378.00px;font-size:13px;line-height:13px;color:#222;transform:scaleY(1.07);transform-origin:0 11.00px;letter-spacing:-0.1px;left:1038.0px;width:600px;text-align:center;">13</div>
<div class="t" style="top:378.00px;font-size:13px;line-height:13px;color:#222;transform:scaleY(1.07);transform-origin:0 11.00px;letter-spacing:-0.1px;left:1124.0px;width:600px;text-align:center;">14</div>
<div class="t" style="top:378.00px;font-size:13px;line-height:13px;color:#222;transform:scaleY(1.07);transform-origin:0 11.00px;letter-spacing:-0.1px;left:1231.0px;width:600px;text-align:center;">15</div>
<div class="t" style="top:396.00px;font-size:13px;line-height:13px;color:#222;transform:scaleY(1.07);transform-origin:0 11.00px;letter-spacing:-0.22px;right:1417.5px;">1</div>
<div class="t" style="top:396.00px;font-size:13px;line-height:13px;color:#222;letter-spacing:0px;left:292px;">014-кож розовый (розовый, 36)</div>
<div class="t" style="top:396.00px;font-size:13px;line-height:13px;color:#222;transform:scaleY(1.07);transform-origin:0 11.00px;letter-spacing:-0.22px;left:534.5px;">00-00000002</div>
<div class="t" style="top:396.00px;font-size:13px;line-height:13px;color:#222;letter-spacing:0px;left:363.0px;width:600px;text-align:center;">пар.</div>
<div class="t" style="top:396.00px;font-size:13px;line-height:13px;color:#222;transform:scaleY(1.07);transform-origin:0 11.00px;letter-spacing:-0.22px;left:426.0px;width:600px;text-align:center;">715</div>
<div class="t" style="top:396.00px;font-size:13px;line-height:13px;color:#222;letter-spacing:0px;left:482.5px;width:600px;text-align:center;">пар.</div>
<div class="t" style="top:396.00px;font-size:13px;line-height:13px;color:#222;transform:scaleY(1.07);transform-origin:0 11.00px;letter-spacing:-0.22px;right:845.5px;">1,000</div>
<div class="t" style="top:396.00px;font-size:13px;line-height:13px;color:#222;transform:scaleY(1.07);transform-origin:0 11.00px;letter-spacing:-0.22px;right:775px;">2</div>
<div class="t" style="top:396.00px;font-size:13px;line-height:13px;color:#222;transform:scaleY(1.07);transform-origin:0 11.00px;letter-spacing:-0.22px;right:617.5px;">2,000</div>
<div class="t" style="top:396.00px;font-size:13px;line-height:13px;color:#222;transform:scaleY(1.07);transform-origin:0 11.00px;letter-spacing:-0.22px;right:517.5px;">6 000,00</div>
<div class="t" style="top:396.00px;font-size:13px;line-height:13px;color:#222;transform:scaleY(1.07);transform-origin:0 11.00px;letter-spacing:-0.22px;right:403.5px;">12 000,00</div>
<div class="t" style="top:396.00px;font-size:13px;line-height:13px;color:#222;letter-spacing:-0.05px;left:1038.0px;width:600px;text-align:center;">Без НДС</div>
<div class="t" style="top:396.00px;font-size:13px;line-height:13px;color:#222;transform:scaleY(1.07);transform-origin:0 11.00px;letter-spacing:-0.22px;right:118.5px;">12 000,00</div>
<div class="r" style="left:238px;top:410px;width:1350px;height:1px;background:#353535;"></div>
<div class="t" style="top:413.00px;font-size:13px;line-height:13px;color:#222;transform:scaleY(1.07);transform-origin:0 11.00px;letter-spacing:-0.22px;right:1417.5px;">2</div>
<div class="t" style="top:413.00px;font-size:13px;line-height:13px;color:#222;letter-spacing:0px;left:292px;">014-кож розовый (розовый, 37)</div>
<div class="t" style="top:413.00px;font-size:13px;line-height:13px;color:#222;transform:scaleY(1.07);transform-origin:0 11.00px;letter-spacing:-0.22px;left:534.5px;">00-00000002</div>
<div class="t" style="top:413.00px;font-size:13px;line-height:13px;color:#222;letter-spacing:0px;left:363.0px;width:600px;text-align:center;">пар.</div>
<div class="t" style="top:413.00px;font-size:13px;line-height:13px;color:#222;transform:scaleY(1.07);transform-origin:0 11.00px;letter-spacing:-0.22px;left:426.0px;width:600px;text-align:center;">715</div>
<div class="t" style="top:413.00px;font-size:13px;line-height:13px;color:#222;letter-spacing:0px;left:482.5px;width:600px;text-align:center;">пар.</div>
<div class="t" style="top:413.00px;font-size:13px;line-height:13px;color:#222;transform:scaleY(1.07);transform-origin:0 11.00px;letter-spacing:-0.22px;right:845.5px;">1,000</div>
<div class="t" style="top:413.00px;font-size:13px;line-height:13px;color:#222;transform:scaleY(1.07);transform-origin:0 11.00px;letter-spacing:-0.22px;right:775px;">2</div>
<div class="t" style="top:413.00px;font-size:13px;line-height:13px;color:#222;transform:scaleY(1.07);transform-origin:0 11.00px;letter-spacing:-0.22px;right:617.5px;">2,000</div>
<div class="t" style="top:413.00px;font-size:13px;line-height:13px;color:#222;transform:scaleY(1.07);transform-origin:0 11.00px;letter-spacing:-0.22px;right:517.5px;">6 000,00</div>
<div class="t" style="top:413.00px;font-size:13px;line-height:13px;color:#222;transform:scaleY(1.07);transform-origin:0 11.00px;letter-spacing:-0.22px;right:403.5px;">12 000,00</div>
<div class="t" style="top:413.00px;font-size:13px;line-height:13px;color:#222;letter-spacing:-0.05px;left:1038.0px;width:600px;text-align:center;">Без НДС</div>
<div class="t" style="top:413.00px;font-size:13px;line-height:13px;color:#222;transform:scaleY(1.07);transform-origin:0 11.00px;letter-spacing:-0.22px;right:118.5px;">12 000,00</div>
<div class="r" style="left:238px;top:427px;width:1350px;height:1px;background:#353535;"></div>
<div class="t" style="top:430.00px;font-size:13px;line-height:13px;color:#222;transform:scaleY(1.07);transform-origin:0 11.00px;letter-spacing:-0.22px;right:1417.5px;">3</div>
<div class="t" style="top:430.00px;font-size:13px;line-height:13px;color:#222;letter-spacing:0px;left:292px;">014-кож розовый (розовый, 38)</div>
<div class="t" style="top:430.00px;font-size:13px;line-height:13px;color:#222;transform:scaleY(1.07);transform-origin:0 11.00px;letter-spacing:-0.22px;left:534.5px;">00-00000002</div>
<div class="t" style="top:430.00px;font-size:13px;line-height:13px;color:#222;letter-spacing:0px;left:363.0px;width:600px;text-align:center;">пар.</div>
<div class="t" style="top:430.00px;font-size:13px;line-height:13px;color:#222;transform:scaleY(1.07);transform-origin:0 11.00px;letter-spacing:-0.22px;left:426.0px;width:600px;text-align:center;">715</div>
<div class="t" style="top:430.00px;font-size:13px;line-height:13px;color:#222;letter-spacing:0px;left:482.5px;width:600px;text-align:center;">пар.</div>
<div class="t" style="top:430.00px;font-size:13px;line-height:13px;color:#222;transform:scaleY(1.07);transform-origin:0 11.00px;letter-spacing:-0.22px;right:845.5px;">1,000</div>
<div class="t" style="top:430.00px;font-size:13px;line-height:13px;color:#222;transform:scaleY(1.07);transform-origin:0 11.00px;letter-spacing:-0.22px;right:775px;">2</div>
<div class="t" style="top:430.00px;font-size:13px;line-height:13px;color:#222;transform:scaleY(1.07);transform-origin:0 11.00px;letter-spacing:-0.22px;right:617.5px;">2,000</div>
<div class="t" style="top:430.00px;font-size:13px;line-height:13px;color:#222;transform:scaleY(1.07);transform-origin:0 11.00px;letter-spacing:-0.22px;right:517.5px;">6 000,00</div>
<div class="t" style="top:430.00px;font-size:13px;line-height:13px;color:#222;transform:scaleY(1.07);transform-origin:0 11.00px;letter-spacing:-0.22px;right:403.5px;">12 000,00</div>
<div class="t" style="top:430.00px;font-size:13px;line-height:13px;color:#222;letter-spacing:-0.05px;left:1038.0px;width:600px;text-align:center;">Без НДС</div>
<div class="t" style="top:430.00px;font-size:13px;line-height:13px;color:#222;transform:scaleY(1.07);transform-origin:0 11.00px;letter-spacing:-0.22px;right:118.5px;">12 000,00</div>
<div class="r" style="left:238px;top:444px;width:1350px;height:1px;background:#353535;"></div>
<div class="t" style="top:447.00px;font-size:13px;line-height:13px;color:#222;transform:scaleY(1.07);transform-origin:0 11.00px;letter-spacing:-0.22px;right:1417.5px;">4</div>
<div class="t" style="top:447.00px;font-size:13px;line-height:13px;color:#222;letter-spacing:0px;left:292px;">014-кож розовый (розовый, 39)</div>
<div class="t" style="top:447.00px;font-size:13px;line-height:13px;color:#222;transform:scaleY(1.07);transform-origin:0 11.00px;letter-spacing:-0.22px;left:534.5px;">00-00000002</div>
<div class="t" style="top:447.00px;font-size:13px;line-height:13px;color:#222;letter-spacing:0px;left:363.0px;width:600px;text-align:center;">пар.</div>
<div class="t" style="top:447.00px;font-size:13px;line-height:13px;color:#222;transform:scaleY(1.07);transform-origin:0 11.00px;letter-spacing:-0.22px;left:426.0px;width:600px;text-align:center;">715</div>
<div class="t" style="top:447.00px;font-size:13px;line-height:13px;color:#222;letter-spacing:0px;left:482.5px;width:600px;text-align:center;">пар.</div>
<div class="t" style="top:447.00px;font-size:13px;line-height:13px;color:#222;transform:scaleY(1.07);transform-origin:0 11.00px;letter-spacing:-0.22px;right:845.5px;">1,000</div>
<div class="t" style="top:447.00px;font-size:13px;line-height:13px;color:#222;transform:scaleY(1.07);transform-origin:0 11.00px;letter-spacing:-0.22px;right:775px;">1</div>
<div class="t" style="top:447.00px;font-size:13px;line-height:13px;color:#222;transform:scaleY(1.07);transform-origin:0 11.00px;letter-spacing:-0.22px;right:617.5px;">1,000</div>
<div class="t" style="top:447.00px;font-size:13px;line-height:13px;color:#222;transform:scaleY(1.07);transform-origin:0 11.00px;letter-spacing:-0.22px;right:517.5px;">6 000,00</div>
<div class="t" style="top:447.00px;font-size:13px;line-height:13px;color:#222;transform:scaleY(1.07);transform-origin:0 11.00px;letter-spacing:-0.22px;right:403.5px;">6 000,00</div>
<div class="t" style="top:447.00px;font-size:13px;line-height:13px;color:#222;letter-spacing:-0.05px;left:1038.0px;width:600px;text-align:center;">Без НДС</div>
<div class="t" style="top:447.00px;font-size:13px;line-height:13px;color:#222;transform:scaleY(1.07);transform-origin:0 11.00px;letter-spacing:-0.22px;right:118.5px;">6 000,00</div>
<div class="r" style="left:238px;top:461px;width:1350px;height:1px;background:#353535;"></div>
<div class="t" style="top:464.00px;font-size:13px;line-height:13px;color:#222;transform:scaleY(1.07);transform-origin:0 11.00px;letter-spacing:-0.22px;right:1417.5px;">5</div>
<div class="t" style="top:464.00px;font-size:13px;line-height:13px;color:#222;letter-spacing:0px;left:292px;">014-крокодил черный (черный, 35)</div>
<div class="t" style="top:464.00px;font-size:13px;line-height:13px;color:#222;transform:scaleY(1.07);transform-origin:0 11.00px;letter-spacing:-0.22px;left:534.5px;">00-00000003</div>
<div class="t" style="top:464.00px;font-size:13px;line-height:13px;color:#222;letter-spacing:0px;left:363.0px;width:600px;text-align:center;">пар.</div>
<div class="t" style="top:464.00px;font-size:13px;line-height:13px;color:#222;transform:scaleY(1.07);transform-origin:0 11.00px;letter-spacing:-0.22px;left:426.0px;width:600px;text-align:center;">715</div>
<div class="t" style="top:464.00px;font-size:13px;line-height:13px;color:#222;letter-spacing:0px;left:482.5px;width:600px;text-align:center;">пар.</div>
<div class="t" style="top:464.00px;font-size:13px;line-height:13px;color:#222;transform:scaleY(1.07);transform-origin:0 11.00px;letter-spacing:-0.22px;right:845.5px;">1,000</div>
<div class="t" style="top:464.00px;font-size:13px;line-height:13px;color:#222;transform:scaleY(1.07);transform-origin:0 11.00px;letter-spacing:-0.22px;right:775px;">1</div>
<div class="t" style="top:464.00px;font-size:13px;line-height:13px;color:#222;transform:scaleY(1.07);transform-origin:0 11.00px;letter-spacing:-0.22px;right:617.5px;">1,000</div>
<div class="t" style="top:464.00px;font-size:13px;line-height:13px;color:#222;transform:scaleY(1.07);transform-origin:0 11.00px;letter-spacing:-0.22px;right:517.5px;">6 000,00</div>
<div class="t" style="top:464.00px;font-size:13px;line-height:13px;color:#222;transform:scaleY(1.07);transform-origin:0 11.00px;letter-spacing:-0.22px;right:403.5px;">6 000,00</div>
<div class="t" style="top:464.00px;font-size:13px;line-height:13px;color:#222;letter-spacing:-0.05px;left:1038.0px;width:600px;text-align:center;">Без НДС</div>
<div class="t" style="top:464.00px;font-size:13px;line-height:13px;color:#222;transform:scaleY(1.07);transform-origin:0 11.00px;letter-spacing:-0.22px;right:118.5px;">6 000,00</div>
<div class="r" style="left:238px;top:478px;width:1350px;height:1px;background:#353535;"></div>
<div class="t" style="top:481.00px;font-size:13px;line-height:13px;color:#222;transform:scaleY(1.07);transform-origin:0 11.00px;letter-spacing:-0.22px;right:1417.5px;">6</div>
<div class="t" style="top:481.00px;font-size:13px;line-height:13px;color:#222;letter-spacing:0px;left:292px;">014-крокодил черный (черный, 36)</div>
<div class="t" style="top:481.00px;font-size:13px;line-height:13px;color:#222;transform:scaleY(1.07);transform-origin:0 11.00px;letter-spacing:-0.22px;left:534.5px;">00-00000003</div>
<div class="t" style="top:481.00px;font-size:13px;line-height:13px;color:#222;letter-spacing:0px;left:363.0px;width:600px;text-align:center;">пар.</div>
<div class="t" style="top:481.00px;font-size:13px;line-height:13px;color:#222;transform:scaleY(1.07);transform-origin:0 11.00px;letter-spacing:-0.22px;left:426.0px;width:600px;text-align:center;">715</div>
<div class="t" style="top:481.00px;font-size:13px;line-height:13px;color:#222;letter-spacing:0px;left:482.5px;width:600px;text-align:center;">пар.</div>
<div class="t" style="top:481.00px;font-size:13px;line-height:13px;color:#222;transform:scaleY(1.07);transform-origin:0 11.00px;letter-spacing:-0.22px;right:845.5px;">1,000</div>
<div class="t" style="top:481.00px;font-size:13px;line-height:13px;color:#222;transform:scaleY(1.07);transform-origin:0 11.00px;letter-spacing:-0.22px;right:775px;">2</div>
<div class="t" style="top:481.00px;font-size:13px;line-height:13px;color:#222;transform:scaleY(1.07);transform-origin:0 11.00px;letter-spacing:-0.22px;right:617.5px;">2,000</div>
<div class="t" style="top:481.00px;font-size:13px;line-height:13px;color:#222;transform:scaleY(1.07);transform-origin:0 11.00px;letter-spacing:-0.22px;right:517.5px;">6 000,00</div>
<div class="t" style="top:481.00px;font-size:13px;line-height:13px;color:#222;transform:scaleY(1.07);transform-origin:0 11.00px;letter-spacing:-0.22px;right:403.5px;">12 000,00</div>
<div class="t" style="top:481.00px;font-size:13px;line-height:13px;color:#222;letter-spacing:-0.05px;left:1038.0px;width:600px;text-align:center;">Без НДС</div>
<div class="t" style="top:481.00px;font-size:13px;line-height:13px;color:#222;transform:scaleY(1.07);transform-origin:0 11.00px;letter-spacing:-0.22px;right:118.5px;">12 000,00</div>
<div class="r" style="left:238px;top:495px;width:1350px;height:1px;background:#353535;"></div>
<div class="t" style="top:498.00px;font-size:13px;line-height:13px;color:#222;transform:scaleY(1.07);transform-origin:0 11.00px;letter-spacing:-0.22px;right:1417.5px;">7</div>
<div class="t" style="top:498.00px;font-size:13px;line-height:13px;color:#222;letter-spacing:0px;left:292px;">014-крокодил черный (черный, 37)</div>
<div class="t" style="top:498.00px;font-size:13px;line-height:13px;color:#222;transform:scaleY(1.07);transform-origin:0 11.00px;letter-spacing:-0.22px;left:534.5px;">00-00000003</div>
<div class="t" style="top:498.00px;font-size:13px;line-height:13px;color:#222;letter-spacing:0px;left:363.0px;width:600px;text-align:center;">пар.</div>
<div class="t" style="top:498.00px;font-size:13px;line-height:13px;color:#222;transform:scaleY(1.07);transform-origin:0 11.00px;letter-spacing:-0.22px;left:426.0px;width:600px;text-align:center;">715</div>
<div class="t" style="top:498.00px;font-size:13px;line-height:13px;color:#222;letter-spacing:0px;left:482.5px;width:600px;text-align:center;">пар.</div>
<div class="t" style="top:498.00px;font-size:13px;line-height:13px;color:#222;transform:scaleY(1.07);transform-origin:0 11.00px;letter-spacing:-0.22px;right:845.5px;">1,000</div>
<div class="t" style="top:498.00px;font-size:13px;line-height:13px;color:#222;transform:scaleY(1.07);transform-origin:0 11.00px;letter-spacing:-0.22px;right:775px;">2</div>
<div class="t" style="top:498.00px;font-size:13px;line-height:13px;color:#222;transform:scaleY(1.07);transform-origin:0 11.00px;letter-spacing:-0.22px;right:617.5px;">2,000</div>
<div class="t" style="top:498.00px;font-size:13px;line-height:13px;color:#222;transform:scaleY(1.07);transform-origin:0 11.00px;letter-spacing:-0.22px;right:517.5px;">6 000,00</div>
<div class="t" style="top:498.00px;font-size:13px;line-height:13px;color:#222;transform:scaleY(1.07);transform-origin:0 11.00px;letter-spacing:-0.22px;right:403.5px;">12 000,00</div>
<div class="t" style="top:498.00px;font-size:13px;line-height:13px;color:#222;letter-spacing:-0.05px;left:1038.0px;width:600px;text-align:center;">Без НДС</div>
<div class="t" style="top:498.00px;font-size:13px;line-height:13px;color:#222;transform:scaleY(1.07);transform-origin:0 11.00px;letter-spacing:-0.22px;right:118.5px;">12 000,00</div>
<div class="r" style="left:238px;top:512px;width:1350px;height:1px;background:#353535;"></div>
<div class="t" style="top:515.00px;font-size:13px;line-height:13px;color:#222;transform:scaleY(1.07);transform-origin:0 11.00px;letter-spacing:-0.22px;right:1417.5px;">8</div>
<div class="t" style="top:515.00px;font-size:13px;line-height:13px;color:#222;letter-spacing:0px;left:292px;">014-крокодил черный (черный, 38)</div>
<div class="t" style="top:515.00px;font-size:13px;line-height:13px;color:#222;transform:scaleY(1.07);transform-origin:0 11.00px;letter-spacing:-0.22px;left:534.5px;">00-00000003</div>
<div class="t" style="top:515.00px;font-size:13px;line-height:13px;color:#222;letter-spacing:0px;left:363.0px;width:600px;text-align:center;">пар.</div>
<div class="t" style="top:515.00px;font-size:13px;line-height:13px;color:#222;transform:scaleY(1.07);transform-origin:0 11.00px;letter-spacing:-0.22px;left:426.0px;width:600px;text-align:center;">715</div>
<div class="t" style="top:515.00px;font-size:13px;line-height:13px;color:#222;letter-spacing:0px;left:482.5px;width:600px;text-align:center;">пар.</div>
<div class="t" style="top:515.00px;font-size:13px;line-height:13px;color:#222;transform:scaleY(1.07);transform-origin:0 11.00px;letter-spacing:-0.22px;right:845.5px;">1,000</div>
<div class="t" style="top:515.00px;font-size:13px;line-height:13px;color:#222;transform:scaleY(1.07);transform-origin:0 11.00px;letter-spacing:-0.22px;right:775px;">2</div>
<div class="t" style="top:515.00px;font-size:13px;line-height:13px;color:#222;transform:scaleY(1.07);transform-origin:0 11.00px;letter-spacing:-0.22px;right:617.5px;">2,000</div>
<div class="t" style="top:515.00px;font-size:13px;line-height:13px;color:#222;transform:scaleY(1.07);transform-origin:0 11.00px;letter-spacing:-0.22px;right:517.5px;">6 000,00</div>
<div class="t" style="top:515.00px;font-size:13px;line-height:13px;color:#222;transform:scaleY(1.07);transform-origin:0 11.00px;letter-spacing:-0.22px;right:403.5px;">12 000,00</div>
<div class="t" style="top:515.00px;font-size:13px;line-height:13px;color:#222;letter-spacing:-0.05px;left:1038.0px;width:600px;text-align:center;">Без НДС</div>
<div class="t" style="top:515.00px;font-size:13px;line-height:13px;color:#222;transform:scaleY(1.07);transform-origin:0 11.00px;letter-spacing:-0.22px;right:118.5px;">12 000,00</div>
<div class="r" style="left:238px;top:529px;width:1350px;height:1px;background:#353535;"></div>
<div class="t" style="top:532.00px;font-size:13px;line-height:13px;color:#222;transform:scaleY(1.07);transform-origin:0 11.00px;letter-spacing:-0.22px;right:1417.5px;">9</div>
<div class="t" style="top:532.00px;font-size:13px;line-height:13px;color:#222;letter-spacing:0px;left:292px;">014-крокодил черный (черный, 39)</div>
<div class="t" style="top:532.00px;font-size:13px;line-height:13px;color:#222;transform:scaleY(1.07);transform-origin:0 11.00px;letter-spacing:-0.22px;left:534.5px;">00-00000003</div>
<div class="t" style="top:532.00px;font-size:13px;line-height:13px;color:#222;letter-spacing:0px;left:363.0px;width:600px;text-align:center;">пар.</div>
<div class="t" style="top:532.00px;font-size:13px;line-height:13px;color:#222;transform:scaleY(1.07);transform-origin:0 11.00px;letter-spacing:-0.22px;left:426.0px;width:600px;text-align:center;">715</div>
<div class="t" style="top:532.00px;font-size:13px;line-height:13px;color:#222;letter-spacing:0px;left:482.5px;width:600px;text-align:center;">пар.</div>
<div class="t" style="top:532.00px;font-size:13px;line-height:13px;color:#222;transform:scaleY(1.07);transform-origin:0 11.00px;letter-spacing:-0.22px;right:845.5px;">1,000</div>
<div class="t" style="top:532.00px;font-size:13px;line-height:13px;color:#222;transform:scaleY(1.07);transform-origin:0 11.00px;letter-spacing:-0.22px;right:775px;">1</div>
<div class="t" style="top:532.00px;font-size:13px;line-height:13px;color:#222;transform:scaleY(1.07);transform-origin:0 11.00px;letter-spacing:-0.22px;right:617.5px;">1,000</div>
<div class="t" style="top:532.00px;font-size:13px;line-height:13px;color:#222;transform:scaleY(1.07);transform-origin:0 11.00px;letter-spacing:-0.22px;right:517.5px;">6 000,00</div>
<div class="t" style="top:532.00px;font-size:13px;line-height:13px;color:#222;transform:scaleY(1.07);transform-origin:0 11.00px;letter-spacing:-0.22px;right:403.5px;">6 000,00</div>
<div class="t" style="top:532.00px;font-size:13px;line-height:13px;color:#222;letter-spacing:-0.05px;left:1038.0px;width:600px;text-align:center;">Без НДС</div>
<div class="t" style="top:532.00px;font-size:13px;line-height:13px;color:#222;transform:scaleY(1.07);transform-origin:0 11.00px;letter-spacing:-0.22px;right:118.5px;">6 000,00</div>
<div class="r" style="left:238px;top:546px;width:1350px;height:1px;background:#353535;"></div>
<div class="t" style="top:549.00px;font-size:13px;line-height:13px;color:#222;transform:scaleY(1.07);transform-origin:0 11.00px;letter-spacing:-0.22px;right:1417.5px;">10</div>
<div class="t" style="top:549.00px;font-size:13px;line-height:13px;color:#222;letter-spacing:0px;left:292px;">051-кож черный+кож бордо</div>
<div class="t" style="top:565.00px;font-size:13px;line-height:13px;color:#222;letter-spacing:0px;left:292px;">(черный+бордо, 35)</div>
<div class="t" style="top:549.00px;font-size:13px;line-height:13px;color:#222;transform:scaleY(1.07);transform-origin:0 11.00px;letter-spacing:-0.22px;left:534.5px;">00-00000004</div>
<div class="t" style="top:549.00px;font-size:13px;line-height:13px;color:#222;letter-spacing:0px;left:363.0px;width:600px;text-align:center;">пар.</div>
<div class="t" style="top:549.00px;font-size:13px;line-height:13px;color:#222;transform:scaleY(1.07);transform-origin:0 11.00px;letter-spacing:-0.22px;left:426.0px;width:600px;text-align:center;">715</div>
<div class="t" style="top:549.00px;font-size:13px;line-height:13px;color:#222;letter-spacing:0px;left:482.5px;width:600px;text-align:center;">пар.</div>
<div class="t" style="top:549.00px;font-size:13px;line-height:13px;color:#222;transform:scaleY(1.07);transform-origin:0 11.00px;letter-spacing:-0.22px;right:845.5px;">1,000</div>
<div class="t" style="top:549.00px;font-size:13px;line-height:13px;color:#222;transform:scaleY(1.07);transform-origin:0 11.00px;letter-spacing:-0.22px;right:775px;">1</div>
<div class="t" style="top:549.00px;font-size:13px;line-height:13px;color:#222;transform:scaleY(1.07);transform-origin:0 11.00px;letter-spacing:-0.22px;right:617.5px;">1,000</div>
<div class="t" style="top:549.00px;font-size:13px;line-height:13px;color:#222;transform:scaleY(1.07);transform-origin:0 11.00px;letter-spacing:-0.22px;right:517.5px;">6 000,00</div>
<div class="t" style="top:549.00px;font-size:13px;line-height:13px;color:#222;transform:scaleY(1.07);transform-origin:0 11.00px;letter-spacing:-0.22px;right:403.5px;">6 000,00</div>
<div class="t" style="top:549.00px;font-size:13px;line-height:13px;color:#222;letter-spacing:-0.05px;left:1038.0px;width:600px;text-align:center;">Без НДС</div>
<div class="t" style="top:549.00px;font-size:13px;line-height:13px;color:#222;transform:scaleY(1.07);transform-origin:0 11.00px;letter-spacing:-0.22px;right:118.5px;">6 000,00</div>
<div class="r" style="left:238px;top:579px;width:1350px;height:1px;background:#353535;"></div>
<div class="t" style="top:582.00px;font-size:13px;line-height:13px;color:#222;transform:scaleY(1.07);transform-origin:0 11.00px;letter-spacing:-0.22px;right:1417.5px;">11</div>
<div class="t" style="top:582.00px;font-size:13px;line-height:13px;color:#222;letter-spacing:0px;left:292px;">051-кож черный+кож бордо</div>
<div class="t" style="top:598.00px;font-size:13px;line-height:13px;color:#222;letter-spacing:0px;left:292px;">(черный+бордо, 36)</div>
<div class="t" style="top:582.00px;font-size:13px;line-height:13px;color:#222;transform:scaleY(1.07);transform-origin:0 11.00px;letter-spacing:-0.22px;left:534.5px;">00-00000004</div>
<div class="t" style="top:582.00px;font-size:13px;line-height:13px;color:#222;letter-spacing:0px;left:363.0px;width:600px;text-align:center;">пар.</div>
<div class="t" style="top:582.00px;font-size:13px;line-height:13px;color:#222;transform:scaleY(1.07);transform-origin:0 11.00px;letter-spacing:-0.22px;left:426.0px;width:600px;text-align:center;">715</div>
<div class="t" style="top:582.00px;font-size:13px;line-height:13px;color:#222;letter-spacing:0px;left:482.5px;width:600px;text-align:center;">пар.</div>
<div class="t" style="top:582.00px;font-size:13px;line-height:13px;color:#222;transform:scaleY(1.07);transform-origin:0 11.00px;letter-spacing:-0.22px;right:845.5px;">1,000</div>
<div class="t" style="top:582.00px;font-size:13px;line-height:13px;color:#222;transform:scaleY(1.07);transform-origin:0 11.00px;letter-spacing:-0.22px;right:775px;">1</div>
<div class="t" style="top:582.00px;font-size:13px;line-height:13px;color:#222;transform:scaleY(1.07);transform-origin:0 11.00px;letter-spacing:-0.22px;right:617.5px;">1,000</div>
<div class="t" style="top:582.00px;font-size:13px;line-height:13px;color:#222;transform:scaleY(1.07);transform-origin:0 11.00px;letter-spacing:-0.22px;right:517.5px;">6 000,00</div>
<div class="t" style="top:582.00px;font-size:13px;line-height:13px;color:#222;transform:scaleY(1.07);transform-origin:0 11.00px;letter-spacing:-0.22px;right:403.5px;">6 000,00</div>
<div class="t" style="top:582.00px;font-size:13px;line-height:13px;color:#222;letter-spacing:-0.05px;left:1038.0px;width:600px;text-align:center;">Без НДС</div>
<div class="t" style="top:582.00px;font-size:13px;line-height:13px;color:#222;transform:scaleY(1.07);transform-origin:0 11.00px;letter-spacing:-0.22px;right:118.5px;">6 000,00</div>
<div class="r" style="left:238px;top:612px;width:1350px;height:1px;background:#353535;"></div>
<div class="t" style="top:615.00px;font-size:13px;line-height:13px;color:#222;transform:scaleY(1.07);transform-origin:0 11.00px;letter-spacing:-0.22px;right:1417.5px;">12</div>
<div class="t" style="top:615.00px;font-size:13px;line-height:13px;color:#222;letter-spacing:0px;left:292px;">051-кож черный+кож бордо</div>
<div class="t" style="top:631.00px;font-size:13px;line-height:13px;color:#222;letter-spacing:0px;left:292px;">(черный+бордо, 37)</div>
<div class="t" style="top:615.00px;font-size:13px;line-height:13px;color:#222;transform:scaleY(1.07);transform-origin:0 11.00px;letter-spacing:-0.22px;left:534.5px;">00-00000004</div>
<div class="t" style="top:615.00px;font-size:13px;line-height:13px;color:#222;letter-spacing:0px;left:363.0px;width:600px;text-align:center;">пар.</div>
<div class="t" style="top:615.00px;font-size:13px;line-height:13px;color:#222;transform:scaleY(1.07);transform-origin:0 11.00px;letter-spacing:-0.22px;left:426.0px;width:600px;text-align:center;">715</div>
<div class="t" style="top:615.00px;font-size:13px;line-height:13px;color:#222;letter-spacing:0px;left:482.5px;width:600px;text-align:center;">пар.</div>
<div class="t" style="top:615.00px;font-size:13px;line-height:13px;color:#222;transform:scaleY(1.07);transform-origin:0 11.00px;letter-spacing:-0.22px;right:845.5px;">1,000</div>
<div class="t" style="top:615.00px;font-size:13px;line-height:13px;color:#222;transform:scaleY(1.07);transform-origin:0 11.00px;letter-spacing:-0.22px;right:775px;">2</div>
<div class="t" style="top:615.00px;font-size:13px;line-height:13px;color:#222;transform:scaleY(1.07);transform-origin:0 11.00px;letter-spacing:-0.22px;right:617.5px;">2,000</div>
<div class="t" style="top:615.00px;font-size:13px;line-height:13px;color:#222;transform:scaleY(1.07);transform-origin:0 11.00px;letter-spacing:-0.22px;right:517.5px;">6 000,00</div>
<div class="t" style="top:615.00px;font-size:13px;line-height:13px;color:#222;transform:scaleY(1.07);transform-origin:0 11.00px;letter-spacing:-0.22px;right:403.5px;">12 000,00</div>
<div class="t" style="top:615.00px;font-size:13px;line-height:13px;color:#222;letter-spacing:-0.05px;left:1038.0px;width:600px;text-align:center;">Без НДС</div>
<div class="t" style="top:615.00px;font-size:13px;line-height:13px;color:#222;transform:scaleY(1.07);transform-origin:0 11.00px;letter-spacing:-0.22px;right:118.5px;">12 000,00</div>
<div class="r" style="left:238px;top:645px;width:1350px;height:1px;background:#353535;"></div>
<div class="t" style="top:648.00px;font-size:13px;line-height:13px;color:#222;transform:scaleY(1.07);transform-origin:0 11.00px;letter-spacing:-0.22px;right:1417.5px;">13</div>
<div class="t" style="top:648.00px;font-size:13px;line-height:13px;color:#222;letter-spacing:0px;left:292px;">051-кож черный+кож бордо</div>
<div class="t" style="top:664.00px;font-size:13px;line-height:13px;color:#222;letter-spacing:0px;left:292px;">(черный+бордо, 38)</div>
<div class="t" style="top:648.00px;font-size:13px;line-height:13px;color:#222;transform:scaleY(1.07);transform-origin:0 11.00px;letter-spacing:-0.22px;left:534.5px;">00-00000004</div>
<div class="t" style="top:648.00px;font-size:13px;line-height:13px;color:#222;letter-spacing:0px;left:363.0px;width:600px;text-align:center;">пар.</div>
<div class="t" style="top:648.00px;font-size:13px;line-height:13px;color:#222;transform:scaleY(1.07);transform-origin:0 11.00px;letter-spacing:-0.22px;left:426.0px;width:600px;text-align:center;">715</div>
<div class="t" style="top:648.00px;font-size:13px;line-height:13px;color:#222;letter-spacing:0px;left:482.5px;width:600px;text-align:center;">пар.</div>
<div class="t" style="top:648.00px;font-size:13px;line-height:13px;color:#222;transform:scaleY(1.07);transform-origin:0 11.00px;letter-spacing:-0.22px;right:845.5px;">1,000</div>
<div class="t" style="top:648.00px;font-size:13px;line-height:13px;color:#222;transform:scaleY(1.07);transform-origin:0 11.00px;letter-spacing:-0.22px;right:775px;">2</div>
<div class="t" style="top:648.00px;font-size:13px;line-height:13px;color:#222;transform:scaleY(1.07);transform-origin:0 11.00px;letter-spacing:-0.22px;right:617.5px;">2,000</div>
<div class="t" style="top:648.00px;font-size:13px;line-height:13px;color:#222;transform:scaleY(1.07);transform-origin:0 11.00px;letter-spacing:-0.22px;right:517.5px;">6 000,00</div>
<div class="t" style="top:648.00px;font-size:13px;line-height:13px;color:#222;transform:scaleY(1.07);transform-origin:0 11.00px;letter-spacing:-0.22px;right:403.5px;">12 000,00</div>
<div class="t" style="top:648.00px;font-size:13px;line-height:13px;color:#222;letter-spacing:-0.05px;left:1038.0px;width:600px;text-align:center;">Без НДС</div>
<div class="t" style="top:648.00px;font-size:13px;line-height:13px;color:#222;transform:scaleY(1.07);transform-origin:0 11.00px;letter-spacing:-0.22px;right:118.5px;">12 000,00</div>
<div class="r" style="left:238px;top:678px;width:1350px;height:1px;background:#353535;"></div>
<div class="t" style="top:681.00px;font-size:13px;line-height:13px;color:#222;transform:scaleY(1.07);transform-origin:0 11.00px;letter-spacing:-0.22px;right:1417.5px;">14</div>
<div class="t" style="top:681.00px;font-size:13px;line-height:13px;color:#222;letter-spacing:0px;left:292px;">051-кож черный+кож бордо</div>
<div class="t" style="top:697.00px;font-size:13px;line-height:13px;color:#222;letter-spacing:0px;left:292px;">(черный+бордо, 39)</div>
<div class="t" style="top:681.00px;font-size:13px;line-height:13px;color:#222;transform:scaleY(1.07);transform-origin:0 11.00px;letter-spacing:-0.22px;left:534.5px;">00-00000004</div>
<div class="t" style="top:681.00px;font-size:13px;line-height:13px;color:#222;letter-spacing:0px;left:363.0px;width:600px;text-align:center;">пар.</div>
<div class="t" style="top:681.00px;font-size:13px;line-height:13px;color:#222;transform:scaleY(1.07);transform-origin:0 11.00px;letter-spacing:-0.22px;left:426.0px;width:600px;text-align:center;">715</div>
<div class="t" style="top:681.00px;font-size:13px;line-height:13px;color:#222;letter-spacing:0px;left:482.5px;width:600px;text-align:center;">пар.</div>
<div class="t" style="top:681.00px;font-size:13px;line-height:13px;color:#222;transform:scaleY(1.07);transform-origin:0 11.00px;letter-spacing:-0.22px;right:845.5px;">1,000</div>
<div class="t" style="top:681.00px;font-size:13px;line-height:13px;color:#222;transform:scaleY(1.07);transform-origin:0 11.00px;letter-spacing:-0.22px;right:775px;">1</div>
<div class="t" style="top:681.00px;font-size:13px;line-height:13px;color:#222;transform:scaleY(1.07);transform-origin:0 11.00px;letter-spacing:-0.22px;right:617.5px;">1,000</div>
<div class="t" style="top:681.00px;font-size:13px;line-height:13px;color:#222;transform:scaleY(1.07);transform-origin:0 11.00px;letter-spacing:-0.22px;right:517.5px;">6 000,00</div>
<div class="t" style="top:681.00px;font-size:13px;line-height:13px;color:#222;transform:scaleY(1.07);transform-origin:0 11.00px;letter-spacing:-0.22px;right:403.5px;">6 000,00</div>
<div class="t" style="top:681.00px;font-size:13px;line-height:13px;color:#222;letter-spacing:-0.05px;left:1038.0px;width:600px;text-align:center;">Без НДС</div>
<div class="t" style="top:681.00px;font-size:13px;line-height:13px;color:#222;transform:scaleY(1.07);transform-origin:0 11.00px;letter-spacing:-0.22px;right:118.5px;">6 000,00</div>
<div class="r" style="left:238px;top:711px;width:1350px;height:1px;background:#353535;"></div>
<div class="t" style="top:714.00px;font-size:13px;line-height:13px;color:#222;transform:scaleY(1.07);transform-origin:0 11.00px;letter-spacing:-0.22px;right:1417.5px;">15</div>
<div class="t" style="top:714.00px;font-size:13px;line-height:13px;color:#222;letter-spacing:0px;left:292px;">051-лак+велюр электрик (электрик, 36)</div>
<div class="t" style="top:714.00px;font-size:13px;line-height:13px;color:#222;transform:scaleY(1.07);transform-origin:0 11.00px;letter-spacing:-0.22px;left:534.5px;">00-00000005</div>
<div class="t" style="top:714.00px;font-size:13px;line-height:13px;color:#222;letter-spacing:0px;left:363.0px;width:600px;text-align:center;">пар.</div>
<div class="t" style="top:714.00px;font-size:13px;line-height:13px;color:#222;transform:scaleY(1.07);transform-origin:0 11.00px;letter-spacing:-0.22px;left:426.0px;width:600px;text-align:center;">715</div>
<div class="t" style="top:714.00px;font-size:13px;line-height:13px;color:#222;letter-spacing:0px;left:482.5px;width:600px;text-align:center;">пар.</div>
<div class="t" style="top:714.00px;font-size:13px;line-height:13px;color:#222;transform:scaleY(1.07);transform-origin:0 11.00px;letter-spacing:-0.22px;right:845.5px;">1,000</div>
<div class="t" style="top:714.00px;font-size:13px;line-height:13px;color:#222;transform:scaleY(1.07);transform-origin:0 11.00px;letter-spacing:-0.22px;right:775px;">2</div>
<div class="t" style="top:714.00px;font-size:13px;line-height:13px;color:#222;transform:scaleY(1.07);transform-origin:0 11.00px;letter-spacing:-0.22px;right:617.5px;">2,000</div>
<div class="t" style="top:714.00px;font-size:13px;line-height:13px;color:#222;transform:scaleY(1.07);transform-origin:0 11.00px;letter-spacing:-0.22px;right:517.5px;">6 000,00</div>
<div class="t" style="top:714.00px;font-size:13px;line-height:13px;color:#222;transform:scaleY(1.07);transform-origin:0 11.00px;letter-spacing:-0.22px;right:403.5px;">12 000,00</div>
<div class="t" style="top:714.00px;font-size:13px;line-height:13px;color:#222;letter-spacing:-0.05px;left:1038.0px;width:600px;text-align:center;">Без НДС</div>
<div class="t" style="top:714.00px;font-size:13px;line-height:13px;color:#222;transform:scaleY(1.07);transform-origin:0 11.00px;letter-spacing:-0.22px;right:118.5px;">12 000,00</div>
<div class="r" style="left:238px;top:728px;width:1350px;height:1px;background:#353535;"></div>
<div class="t" style="top:731.00px;font-size:13px;line-height:13px;color:#222;transform:scaleY(1.07);transform-origin:0 11.00px;letter-spacing:-0.22px;right:1417.5px;">16</div>
<div class="t" style="top:731.00px;font-size:13px;line-height:13px;color:#222;letter-spacing:0px;left:292px;">051-лак+велюр электрик (электрик, 37)</div>
<div class="t" style="top:731.00px;font-size:13px;line-height:13px;color:#222;transform:scaleY(1.07);transform-origin:0 11.00px;letter-spacing:-0.22px;left:534.5px;">00-00000005</div>
<div class="t" style="top:731.00px;font-size:13px;line-height:13px;color:#222;letter-spacing:0px;left:363.0px;width:600px;text-align:center;">пар.</div>
<div class="t" style="top:731.00px;font-size:13px;line-height:13px;color:#222;transform:scaleY(1.07);transform-origin:0 11.00px;letter-spacing:-0.22px;left:426.0px;width:600px;text-align:center;">715</div>
<div class="t" style="top:731.00px;font-size:13px;line-height:13px;color:#222;letter-spacing:0px;left:482.5px;width:600px;text-align:center;">пар.</div>
<div class="t" style="top:731.00px;font-size:13px;line-height:13px;color:#222;transform:scaleY(1.07);transform-origin:0 11.00px;letter-spacing:-0.22px;right:845.5px;">1,000</div>
<div class="t" style="top:731.00px;font-size:13px;line-height:13px;color:#222;transform:scaleY(1.07);transform-origin:0 11.00px;letter-spacing:-0.22px;right:775px;">1</div>
<div class="t" style="top:731.00px;font-size:13px;line-height:13px;color:#222;transform:scaleY(1.07);transform-origin:0 11.00px;letter-spacing:-0.22px;right:617.5px;">1,000</div>
<div class="t" style="top:731.00px;font-size:13px;line-height:13px;color:#222;transform:scaleY(1.07);transform-origin:0 11.00px;letter-spacing:-0.22px;right:517.5px;">6 000,00</div>
<div class="t" style="top:731.00px;font-size:13px;line-height:13px;color:#222;transform:scaleY(1.07);transform-origin:0 11.00px;letter-spacing:-0.22px;right:403.5px;">6 000,00</div>
<div class="t" style="top:731.00px;font-size:13px;line-height:13px;color:#222;letter-spacing:-0.05px;left:1038.0px;width:600px;text-align:center;">Без НДС</div>
<div class="t" style="top:731.00px;font-size:13px;line-height:13px;color:#222;transform:scaleY(1.07);transform-origin:0 11.00px;letter-spacing:-0.22px;right:118.5px;">6 000,00</div>
<div class="r" style="left:238px;top:393px;width:1px;height:353px;background:#353535;"></div>
<div class="r" style="left:288px;top:393px;width:1px;height:353px;background:#353535;"></div>
<div class="r" style="left:530px;top:393px;width:2px;height:354px;background:#353535;"></div>
<div class="r" style="left:626px;top:393px;width:2px;height:354px;background:#353535;"></div>
<div class="r" style="left:699px;top:393px;width:2px;height:354px;background:#353535;"></div>
<div class="r" style="left:756px;top:393px;width:1px;height:353px;background:#353535;"></div>
<div class="r" style="left:808px;top:393px;width:1px;height:353px;background:#353535;"></div>
<div class="r" style="left:860px;top:393px;width:1px;height:353px;background:#353535;"></div>
<div class="r" style="left:930px;top:393px;width:1px;height:353px;background:#353535;"></div>
<div class="r" style="left:1009px;top:393px;width:1px;height:353px;background:#353535;"></div>
<div class="r" style="left:1088px;top:393px;width:1px;height:353px;background:#353535;"></div>
<div class="r" style="left:1188px;top:393px;width:1px;height:353px;background:#353535;"></div>
<div class="r" style="left:1302px;top:393px;width:2px;height:354px;background:#353535;"></div>
<div class="r" style="left:1373px;top:393px;width:2px;height:354px;background:#353535;"></div>
<div class="r" style="left:1474px;top:393px;width:1px;height:353px;background:#353535;"></div>
<div class="r" style="left:1587px;top:393px;width:2px;height:354px;background:#353535;"></div>
<div class="r" style="left:238px;top:393px;width:1350px;height:1px;background:#353535;"></div>
<div class="r" style="left:530px;top:393px;width:98px;height:2px;background:#353535;"></div>
<div class="r" style="left:699px;top:393px;width:890px;height:2px;background:#353535;"></div>
<div class="r" style="left:238px;top:745px;width:1350px;height:1px;background:#353535;"></div>
<div class="r" style="left:530px;top:745px;width:98px;height:2px;background:#353535;"></div>
<div class="r" style="left:699px;top:745px;width:890px;height:2px;background:#353535;"></div>
<div class="r" style="left:860px;top:745px;width:1px;height:18px;background:#353535;"></div>
<div class="r" style="left:930px;top:745px;width:1px;height:18px;background:#353535;"></div>
<div class="r" style="left:1009px;top:745px;width:1px;height:18px;background:#353535;"></div>
<div class="r" style="left:1088px;top:745px;width:1px;height:18px;background:#353535;"></div>
<div class="r" style="left:1188px;top:745px;width:1px;height:18px;background:#353535;"></div>
<div class="r" style="left:1302px;top:745px;width:1px;height:18px;background:#353535;"></div>
<div class="r" style="left:1373px;top:745px;width:1px;height:18px;background:#353535;"></div>
<div class="r" style="left:1474px;top:745px;width:1px;height:18px;background:#353535;"></div>
<div class="r" style="left:1587px;top:745px;width:1px;height:18px;background:#353535;"></div>
<div class="t" style="top:748.00px;font-size:13px;line-height:13px;color:#222;letter-spacing:-0.22px;right:845.5px;">Итого</div>
<div class="t" style="top:748.00px;font-size:13px;line-height:13px;color:#222;transform:scaleY(1.07);transform-origin:0 11.00px;letter-spacing:-0.22px;right:775px;">25</div>
<div class="t" style="top:748.00px;font-size:13px;line-height:13px;color:#222;transform:scaleY(1.07);transform-origin:0 11.00px;letter-spacing:-0.22px;right:617.5px;">25,000</div>
<div class="t" style="top:748.00px;font-size:13px;line-height:13px;color:#222;transform:scaleY(1.07);transform-origin:0 11.00px;letter-spacing:-0.22px;left:838.0px;width:600px;text-align:center;">X</div>
<div class="t" style="top:748.00px;font-size:13px;line-height:13px;color:#222;transform:scaleY(1.07);transform-origin:0 11.00px;letter-spacing:-0.22px;right:403.5px;">150 000,00</div>
<div class="t" style="top:748.00px;font-size:13px;line-height:13px;color:#222;transform:scaleY(1.07);transform-origin:0 11.00px;letter-spacing:-0.22px;left:1038.0px;width:600px;text-align:center;">X</div>
<div class="t" style="top:748.00px;font-size:13px;line-height:13px;color:#222;transform:scaleY(1.07);transform-origin:0 11.00px;letter-spacing:-0.22px;right:118.5px;">150 000,00</div>
<div class="r" style="left:230px;top:762px;width:1472px;height:1px;background:repeating-linear-gradient(90deg,#353535 0 6px,transparent 6px 8px)"></div>
<div class="t" style="top:764.00px;font-size:14.67px;line-height:14.67px;color:#222;font-style:italic;letter-spacing:-0.38px;right:118px;">Страница 2</div>
<div class="r" style="left:238px;top:780px;width:1350px;height:1px;background:#353535;"></div>
<div class="r" style="left:288px;top:798px;width:469px;height:1px;background:#353535;"></div>
<div class="r" style="left:808px;top:798px;width:123px;height:1px;background:#353535;"></div>
<div class="r" style="left:1302px;top:798px;width:173px;height:1px;background:#353535;"></div>
<div class="r" style="left:238px;top:847px;width:1350px;height:1px;background:#353535;"></div>
<div class="r" style="left:238px;top:780px;width:1px;height:85px;background:#353535;"></div>
<div class="r" style="left:288px;top:780px;width:1px;height:85px;background:#353535;"></div>
<div class="r" style="left:530px;top:798px;width:1px;height:67px;background:#353535;"></div>
<div class="r" style="left:626px;top:780px;width:1px;height:85px;background:#353535;"></div>
<div class="r" style="left:699px;top:798px;width:1px;height:67px;background:#353535;"></div>
<div class="r" style="left:756px;top:780px;width:1px;height:85px;background:#353535;"></div>
<div class="r" style="left:808px;top:780px;width:1px;height:85px;background:#353535;"></div>
<div class="r" style="left:860px;top:798px;width:1px;height:67px;background:#353535;"></div>
<div class="r" style="left:930px;top:780px;width:1px;height:85px;background:#353535;"></div>
<div class="r" style="left:1009px;top:780px;width:1px;height:85px;background:#353535;"></div>
<div class="r" style="left:1088px;top:780px;width:1px;height:85px;background:#353535;"></div>
<div class="r" style="left:1188px;top:780px;width:1px;height:85px;background:#353535;"></div>
<div class="r" style="left:1302px;top:780px;width:1px;height:85px;background:#353535;"></div>
<div class="r" style="left:1373px;top:798px;width:1px;height:67px;background:#353535;"></div>
<div class="r" style="left:1474px;top:780px;width:1px;height:85px;background:#353535;"></div>
<div class="r" style="left:1587px;top:780px;width:1px;height:85px;background:#353535;"></div>
<div class="t" style="top:783.00px;font-size:13px;line-height:13px;color:#222;letter-spacing:-0.1px;left:-36.5px;width:600px;text-align:center;">Но-</div>
<div class="t" style="top:799.00px;font-size:13px;line-height:13px;color:#222;letter-spacing:-0.1px;left:-36.5px;width:600px;text-align:center;">мер</div>
<div class="t" style="top:815.00px;font-size:13px;line-height:13px;color:#222;letter-spacing:-0.1px;left:-36.5px;width:600px;text-align:center;">по по-</div>
<div class="t" style="top:831.00px;font-size:13px;line-height:13px;color:#222;letter-spacing:-0.1px;left:-36.5px;width:600px;text-align:center;">рядку</div>
<div class="t" style="top:783.00px;font-size:13px;line-height:13px;color:#222;letter-spacing:-0.1px;left:157.5px;width:600px;text-align:center;">Товар</div>
<div class="t" style="top:809.00px;font-size:13px;line-height:13px;color:#222;letter-spacing:-0.1px;left:106.5px;width:600px;text-align:center;">наименование, характеристика, сорт,</div>
<div class="t" style="top:825.00px;font-size:13px;line-height:13px;color:#222;letter-spacing:-0.1px;left:106.5px;width:600px;text-align:center;">артикул товара</div>
<div class="t" style="top:818.00px;font-size:13px;line-height:13px;color:#222;letter-spacing:-0.1px;left:278.0px;width:600px;text-align:center;">код</div>
<div class="t" style="top:783.00px;font-size:13px;line-height:13px;color:#222;letter-spacing:-0.1px;left:391.0px;width:600px;text-align:center;">Единица измерения</div>
<div class="t" style="top:809.00px;font-size:13px;line-height:13px;color:#222;letter-spacing:-0.1px;left:362.5px;width:600px;text-align:center;">наиме-</div>
<div class="t" style="top:825.00px;font-size:13px;line-height:13px;color:#222;letter-spacing:-0.1px;left:362.5px;width:600px;text-align:center;">нование</div>
<div class="t" style="top:809.00px;font-size:13px;line-height:13px;color:#222;letter-spacing:-0.1px;left:427.5px;width:600px;text-align:center;">код по</div>
<div class="t" style="top:825.00px;font-size:13px;line-height:13px;color:#222;transform:scaleY(1.07);transform-origin:0 11.00px;letter-spacing:-0.1px;left:427.5px;width:600px;text-align:center;">ОКЕИ</div>
<div class="t" style="top:793.00px;font-size:13px;line-height:13px;color:#222;letter-spacing:-0.1px;left:482.0px;width:600px;text-align:center;">Вид</div>
<div class="t" style="top:809.00px;font-size:13px;line-height:13px;color:#222;letter-spacing:-0.1px;left:482.0px;width:600px;text-align:center;">упаков</div>
<div class="t" style="top:825.00px;font-size:13px;line-height:13px;color:#222;letter-spacing:-0.1px;left:482.0px;width:600px;text-align:center;">ки</div>
<div class="t" style="top:783.00px;font-size:13px;line-height:13px;color:#222;letter-spacing:-0.1px;left:569.0px;width:600px;text-align:center;">Количество</div>
<div class="t" style="top:801.00px;font-size:13px;line-height:13px;color:#222;letter-spacing:-0.1px;left:534.0px;width:600px;text-align:center;">в</div>
<div class="t" style="top:817.00px;font-size:13px;line-height:13px;color:#222;letter-spacing:-0.1px;left:534.0px;width:600px;text-align:center;">одном</div>
<div class="t" style="top:833.00px;font-size:13px;line-height:13px;color:#222;letter-spacing:-0.1px;left:534.0px;width:600px;text-align:center;">месте</div>
<div class="t" style="top:809.00px;font-size:13px;line-height:13px;color:#222;letter-spacing:-0.1px;left:595.0px;width:600px;text-align:center;">мест,</div>
<div class="t" style="top:825.00px;font-size:13px;line-height:13px;color:#222;letter-spacing:-0.1px;left:595.0px;width:600px;text-align:center;">штук</div>
<div class="t" style="top:800.00px;font-size:13px;line-height:13px;color:#222;letter-spacing:-0.1px;left:669.5px;width:600px;text-align:center;">Масса</div>
<div class="t" style="top:816.00px;font-size:13px;line-height:13px;color:#222;letter-spacing:-0.1px;left:669.5px;width:600px;text-align:center;">брутто</div>
<div class="t" style="top:783.00px;font-size:13px;line-height:13px;color:#222;letter-spacing:-0.1px;left:748.5px;width:600px;text-align:center;">Коли-</div>
<div class="t" style="top:799.00px;font-size:13px;line-height:13px;color:#222;letter-spacing:-0.1px;left:748.5px;width:600px;text-align:center;">чество</div>
<div class="t" style="top:815.00px;font-size:13px;line-height:13px;color:#222;letter-spacing:-0.1px;left:748.5px;width:600px;text-align:center;">(масса</div>
<div class="t" style="top:831.00px;font-size:13px;line-height:13px;color:#222;letter-spacing:-0.1px;left:748.5px;width:600px;text-align:center;">нетто)</div>
<div class="t" style="top:800.00px;font-size:13px;line-height:13px;color:#222;letter-spacing:-0.1px;left:838.0px;width:600px;text-align:center;">Цена,</div>
<div class="t" style="top:816.00px;font-size:13px;line-height:13px;color:#222;letter-spacing:-0.1px;left:838.0px;width:600px;text-align:center;">руб. коп.</div>
<div class="t" style="top:792.00px;font-size:13px;line-height:13px;color:#222;letter-spacing:-0.1px;left:945.0px;width:600px;text-align:center;">Сумма без</div>
<div class="t" style="top:808.00px;font-size:13px;line-height:13px;color:#222;letter-spacing:-0.1px;left:945.0px;width:600px;text-align:center;">учета НДС,</div>
<div class="t" style="top:824.00px;font-size:13px;line-height:13px;color:#222;letter-spacing:-0.1px;left:945.0px;width:600px;text-align:center;">руб. коп.</div>
<div class="t" style="top:783.00px;font-size:13px;line-height:13px;color:#222;transform:scaleY(1.07);transform-origin:0 11.00px;letter-spacing:-0.1px;left:1088.0px;width:600px;text-align:center;">НДС</div>
<div class="t" style="top:818.00px;font-size:13px;line-height:13px;color:#222;letter-spacing:-0.1px;left:1037.5px;width:600px;text-align:center;">ставка, %</div>
<div class="t" style="top:809.00px;font-size:13px;line-height:13px;color:#222;letter-spacing:-0.1px;left:1123.5px;width:600px;text-align:center;">сумма,</div>
<div class="t" style="top:825.00px;font-size:13px;line-height:13px;color:#222;letter-spacing:-0.1px;left:1123.5px;width:600px;text-align:center;">руб. коп.</div>
<div class="t" style="top:783.00px;font-size:13px;line-height:13px;color:#222;letter-spacing:-0.1px;left:1230.5px;width:600px;text-align:center;">Сумма с</div>
<div class="t" style="top:799.00px;font-size:13px;line-height:13px;color:#222;letter-spacing:-0.1px;left:1230.5px;width:600px;text-align:center;">учетом</div>
<div class="t" style="top:815.00px;font-size:13px;line-height:13px;color:#222;transform:scaleY(1.07);transform-origin:0 11.00px;letter-spacing:-0.1px;left:1230.5px;width:600px;text-align:center;">НДС,</div>
<div class="t" style="top:831.00px;font-size:13px;line-height:13px;color:#222;letter-spacing:-0.1px;left:1230.5px;width:600px;text-align:center;">руб. коп.</div>
<div class="t" style="top:849.00px;font-size:13px;line-height:13px;color:#222;transform:scaleY(1.07);transform-origin:0 11.00px;letter-spacing:-0.1px;left:-36.5px;width:600px;text-align:center;">1</div>
<div class="t" style="top:849.00px;font-size:13px;line-height:13px;color:#222;transform:scaleY(1.07);transform-origin:0 11.00px;letter-spacing:-0.1px;left:109.5px;width:600px;text-align:center;">2</div>
<div class="t" style="top:849.00px;font-size:13px;line-height:13px;color:#222;transform:scaleY(1.07);transform-origin:0 11.00px;letter-spacing:-0.1px;left:278.5px;width:600px;text-align:center;">3</div>
<div class="t" style="top:849.00px;font-size:13px;line-height:13px;color:#222;transform:scaleY(1.07);transform-origin:0 11.00px;letter-spacing:-0.1px;left:363.0px;width:600px;text-align:center;">4</div>
<div class="t" style="top:849.00px;font-size:13px;line-height:13px;color:#222;transform:scaleY(1.07);transform-origin:0 11.00px;letter-spacing:-0.1px;left:428.0px;width:600px;text-align:center;">5</div>
<div class="t" style="top:849.00px;font-size:13px;line-height:13px;color:#222;transform:scaleY(1.07);transform-origin:0 11.00px;letter-spacing:-0.1px;left:482.5px;width:600px;text-align:center;">6</div>
<div class="t" style="top:849.00px;font-size:13px;line-height:13px;color:#222;transform:scaleY(1.07);transform-origin:0 11.00px;letter-spacing:-0.1px;left:534.5px;width:600px;text-align:center;">7</div>
<div class="t" style="top:849.00px;font-size:13px;line-height:13px;color:#222;transform:scaleY(1.07);transform-origin:0 11.00px;letter-spacing:-0.1px;left:595.5px;width:600px;text-align:center;">8</div>
<div class="t" style="top:849.00px;font-size:13px;line-height:13px;color:#222;transform:scaleY(1.07);transform-origin:0 11.00px;letter-spacing:-0.1px;left:670.0px;width:600px;text-align:center;">9</div>
<div class="t" style="top:849.00px;font-size:13px;line-height:13px;color:#222;transform:scaleY(1.07);transform-origin:0 11.00px;letter-spacing:-0.1px;left:749.0px;width:600px;text-align:center;">10</div>
<div class="t" style="top:849.00px;font-size:13px;line-height:13px;color:#222;transform:scaleY(1.07);transform-origin:0 11.00px;letter-spacing:-0.1px;left:838.5px;width:600px;text-align:center;">11</div>
<div class="t" style="top:849.00px;font-size:13px;line-height:13px;color:#222;transform:scaleY(1.07);transform-origin:0 11.00px;letter-spacing:-0.1px;left:945.5px;width:600px;text-align:center;">12</div>
<div class="t" style="top:849.00px;font-size:13px;line-height:13px;color:#222;transform:scaleY(1.07);transform-origin:0 11.00px;letter-spacing:-0.1px;left:1038.0px;width:600px;text-align:center;">13</div>
<div class="t" style="top:849.00px;font-size:13px;line-height:13px;color:#222;transform:scaleY(1.07);transform-origin:0 11.00px;letter-spacing:-0.1px;left:1124.0px;width:600px;text-align:center;">14</div>
<div class="t" style="top:849.00px;font-size:13px;line-height:13px;color:#222;transform:scaleY(1.07);transform-origin:0 11.00px;letter-spacing:-0.1px;left:1231.0px;width:600px;text-align:center;">15</div>
</body></html>
